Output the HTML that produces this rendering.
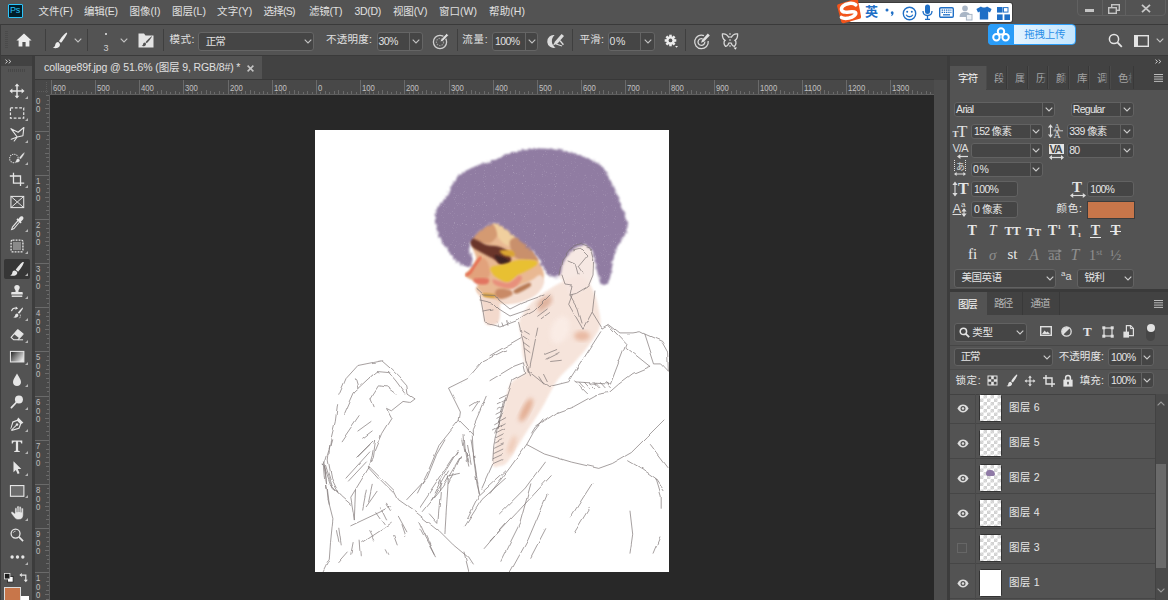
<!DOCTYPE html>
<html lang="zh-CN">
<head>
<meta charset="utf-8">
<title>collage89f.jpg @ 51.6% (图层 9, RGB/8#) *</title>
<style>
html,body{margin:0;padding:0}
body{width:1168px;height:600px;overflow:hidden;position:relative;background:#535353;font-family:"Liberation Sans","Noto Sans CJK SC",sans-serif;font-size:11px;color:#e0e0e0;line-height:1}
div,span,svg{position:absolute;box-sizing:border-box}
.t{white-space:nowrap}
svg{overflow:visible}
#art,#hruler,#vruler{overflow:hidden}
.fld{background:#454545;border:1px solid #656565;border-radius:3px}
.sep{width:1px;background:#3f3f3f}
</style>
<style id="tune">
#m1{font-size:10.5px !important;letter-spacing:-0.03px;margin-left:-0.4px}
#m2{font-size:10.5px !important;letter-spacing:-0.30px;margin-left:0.1px}
#m3{font-size:10.5px !important;letter-spacing:-0.03px;margin-left:-0.4px}
#m4{font-size:10.5px !important;letter-spacing:-0.01px;margin-left:0.1px}
#m5{font-size:10.5px !important;letter-spacing:0.07px;margin-left:0.1px}
#m6{font-size:10.5px !important;letter-spacing:-0.74px;margin-left:0.4px}
#m7{font-size:10.5px !important;letter-spacing:-0.28px;margin-left:0.1px}
#m8{font-size:10.5px !important;letter-spacing:-0.36px;margin-left:-0.4px}
#m9{font-size:10.5px !important;letter-spacing:-0.11px;margin-left:-0.1px}
#m10{font-size:10.5px !important;letter-spacing:-0.03px;margin-left:0.1px}
#m11{font-size:10.5px !important;letter-spacing:0.06px;margin-left:0.1px}
#tabtitle{font-size:10.5px !important;letter-spacing:-0.12px;margin-left:0.1px}
#o_mode{font-size:10.5px !important;letter-spacing:0.44px;margin-left:-0.4px}
#o_normal{font-size:10.5px !important;letter-spacing:-1.10px;margin-left:-0.2px}
#o_opac{font-size:10.5px !important;letter-spacing:0.27px;margin-left:0.0px}
#o_30{font-size:10.5px !important;letter-spacing:-0.51px;margin-left:-1.6px}
#o_flow{font-size:10.5px !important;letter-spacing:0.74px;margin-left:-0.7px}
#o_100{font-size:10.5px !important;letter-spacing:-0.65px;margin-left:0.1px}
#o_smooth{font-size:10.5px !important;letter-spacing:0.24px;margin-left:-0.6px}
#o_0{font-size:10.5px !important;letter-spacing:0.61px;margin-left:-1.4px}
#o_upload{font-size:10.5px !important;letter-spacing:-0.23px;margin-left:-0.7px}
#tab_zf{font-size:10.5px !important;letter-spacing:-0.80px;margin-left:1.1px}
#c_arial{font-size:10.5px !important;letter-spacing:-0.73px;margin-left:-0.9px}
#c_regular{font-size:10.5px !important;letter-spacing:-0.73px;margin-left:-0.2px}
#c_152{font-size:10.5px !important;letter-spacing:-0.71px;margin-left:-0.5px}
#c_339{font-size:10.5px !important;letter-spacing:-0.67px;margin-left:-0.3px}
#c_80{font-size:10.5px !important;letter-spacing:-0.69px;margin-left:-0.3px}
#c_0p{font-size:10.5px !important;letter-spacing:0.61px;margin-left:-1.4px}
#c_100a{font-size:10.5px !important;letter-spacing:-0.69px;margin-left:-0.4px}
#c_100b{font-size:10.5px !important;letter-spacing:-0.75px;margin-left:0.3px}
#c_0px{font-size:10.5px !important;letter-spacing:-0.49px;margin-left:-0.4px}
#c_color{font-size:10.5px !important;letter-spacing:0.69px;margin-left:-0.5px}
#c_lang{font-size:10.5px !important;letter-spacing:-0.50px;margin-left:-0.5px}
#c_sharp{font-size:10.5px !important;letter-spacing:-0.80px;margin-left:-0.5px}
#tab_layers{font-size:10.5px !important;letter-spacing:-1.20px;margin-left:1.0px}
#tab_paths{font-size:10.5px !important;letter-spacing:-1.80px;margin-left:0.1px}
#tab_chan{font-size:10.5px !important;letter-spacing:-1.20px;margin-left:-0.4px}
#l_type{font-size:10.5px !important;letter-spacing:-0.20px;margin-left:-0.3px}
#l_normal{font-size:10.5px !important;letter-spacing:-1.20px;margin-left:-0.2px}
#l_opacity{font-size:10.5px !important;letter-spacing:0.07px;margin-left:-0.8px}
#l_100a{font-size:10.5px !important;letter-spacing:-0.59px;margin-left:-0.5px}
#l_lock{font-size:10.5px !important;letter-spacing:0.59px;margin-left:-0.5px}
#l_fill{font-size:10.5px !important;letter-spacing:0.14px;margin-left:-0.3px}
#l_100b{font-size:10.5px !important;letter-spacing:-0.59px;margin-left:-0.5px}
#ly0{font-size:10.5px !important;letter-spacing:0.28px;margin-left:-0.6px}
#ly1{font-size:10.5px !important;letter-spacing:0.28px;margin-left:-0.6px}
#ly2{font-size:10.5px !important;letter-spacing:0.28px;margin-left:-0.6px}
#ly3{font-size:10.5px !important;letter-spacing:0.28px;margin-left:-0.6px}
#ly4{font-size:10.5px !important;letter-spacing:0.28px;margin-left:-0.6px}
#ly5{font-size:10.5px !important;letter-spacing:0.28px;margin-left:-0.6px}
</style>
</head>
<body>
<!-- MENU BAR -->
<div id="menubar" style="left:0;top:0;width:1168px;height:24px;background:#535353">
  <div style="left:8px;top:4px;width:15px;height:14px;background:#001e2b;border:1px solid #2cc4fa;border-radius:1px"></div>
  <span class="t" style="left:10px;top:6px;font-size:9px;color:#2cc4fa;letter-spacing:-0.3px">Ps</span>
  <span class="t m" id="m1" style="left:39px;top:6px">文件(F)</span>
  <span class="t m" id="m2" style="left:84px;top:6px">编辑(E)</span>
  <span class="t m" id="m3" style="left:130px;top:6px">图像(I)</span>
  <span class="t m" id="m4" style="left:172px;top:6px">图层(L)</span>
  <span class="t m" id="m5" style="left:217px;top:6px">文字(Y)</span>
  <span class="t m" id="m6" style="left:263px;top:6px">选择(S)</span>
  <span class="t m" id="m7" style="left:309px;top:6px">滤镜(T)</span>
  <span class="t m" id="m8" style="left:355px;top:6px">3D(D)</span>
  <span class="t m" id="m9" style="left:393px;top:6px">视图(V)</span>
  <span class="t m" id="m10" style="left:439px;top:6px">窗口(W)</span>
  <span class="t m" id="m11" style="left:489px;top:6px">帮助(H)</span>
</div>
<!-- TOPRIGHT -->
<div id="ime" style="left:836px;top:0;width:180px;height:26px">
  <div style="left:12px;top:2px;width:165px;height:21px;background:#3c3c3c;border-radius:3px"></div>
  <div style="left:13px;top:3px;width:163px;height:19px;background:#fff;border-radius:2px"></div>
  <svg style="left:0;top:0" width="26" height="25" viewBox="0 0 26 25"><path d="M2.2 4.2 L19.6 -1.2 Q21.4 -1.6 22 0.2 L25 16.6 Q25.2 18.2 23.6 18.8 L7.6 23.2 Q5.8 23.6 5.2 21.8 L1.2 6.4 Q0.8 4.8 2.2 4.2 Z" fill="#f2541b"/><path d="M20.6 6 C17.8 2.8 11 3 7.8 5.4 C4.4 8 5.4 11 9.4 11.7 C13 12.3 17.8 11.6 19.2 13.4 C20.2 15.4 16.4 17.6 12 18 C9 18.2 6.2 17.6 4.6 16.4" fill="none" stroke="#fff" stroke-width="3.5" stroke-linecap="round" transform="rotate(-8 12.5 11)"/></svg>
  <span class="t" id="ime_en" style="left:29px;top:5px;font-size:13px;font-weight:bold;color:#1f6fc6">英</span>
  <svg style="left:48px;top:6px" width="12" height="12" viewBox="0 0 12 12"><circle cx="3" cy="4" r="1.5" fill="#1f6fc6"/><path d="M8 5.2 C9.6 5.2 10 7 9.2 8.4 C8.6 9.4 7.6 10 6.8 10.2 C7.6 9.4 8 8.6 7.6 8 C6.4 7.6 6.6 5.2 8 5.2 Z" fill="#1f6fc6"/></svg>
  <svg style="left:66px;top:5.500px" width="15" height="15" viewBox="0 0 15 15"><circle cx="7.500" cy="7.500" r="6.200" fill="none" stroke="#1f6fc6" stroke-width="1.400"/><circle cx="5.200" cy="5.800" r="1" fill="#1f6fc6"/><circle cx="9.800" cy="5.800" r="1" fill="#1f6fc6"/><path d="M4.200 8.800 C5.400 11.400 9.600 11.400 10.800 8.800" fill="none" stroke="#1f6fc6" stroke-width="1.300"/></svg>
  <svg style="left:86px;top:4px" width="11" height="17" viewBox="0 0 11 17"><rect x="3" y="0.500" width="5" height="9.500" rx="2.500" fill="#1f6fc6"/><path d="M1 7 C1 13 10 13 10 7" fill="none" stroke="#1f6fc6" stroke-width="1.300"/><path d="M5.500 11.600 V15 M3 15.400 H8" stroke="#1f6fc6" stroke-width="1.300"/></svg>
  <svg style="left:103px;top:7px" width="15" height="11" viewBox="0 0 15 11"><rect x="0.700" y="0.700" width="13.600" height="9.600" rx="1.200" fill="none" stroke="#1f6fc6" stroke-width="1.400"/><path d="M2.600 3.200 H12.400 M2.600 5.400 H12.400" stroke="#1f6fc6" stroke-width="1.300" stroke-dasharray="1.400 0.800"/><path d="M4 7.800 H11" stroke="#1f6fc6" stroke-width="1.300"/></svg>
  <svg style="left:123px;top:5px" width="14" height="16" viewBox="0 0 14 16"><circle cx="6" cy="3.400" r="2.800" fill="#a9b6c6"/><path d="M0.600 12 C0.600 8 3 7 6 7 C9 7 11.400 8 11.400 12 Z" fill="#a9b6c6"/><rect x="7.400" y="9.400" width="5.600" height="5.600" fill="#eef2f6" stroke="#a9b6c6" stroke-width="1"/></svg>
  <svg style="left:140px;top:6px" width="16" height="14" viewBox="0 0 16 14"><path d="M5 0.400 C6 1.800 10 1.800 11 0.400 L15.600 3 L14 6.400 L12.200 5.600 V13.600 H3.800 V5.600 L2 6.400 L0.400 3 Z" fill="#1f6fc6"/></svg>
  <svg style="left:160.500px;top:6.500px" width="13" height="13" viewBox="0 0 13 13"><rect x="0" y="0" width="5.600" height="5.600" fill="#1f6fc6"/><rect x="7.400" y="0" width="5.600" height="5.600" fill="none" stroke="#1f6fc6" stroke-width="1.200" transform="translate(0.600 0.600) scale(0.800)" /><rect x="0" y="7.400" width="5.600" height="5.600" fill="#1f6fc6"/><rect x="7.400" y="7.400" width="5.600" height="5.600" fill="#1f6fc6"/></svg>
</div>
<div id="winctl" style="left:1077px;top:-1px;width:89px;height:17px;border:1px solid #616161;border-radius:0 0 4px 4px">
  <div style="left:23.500px;top:0;width:1px;height:16px;background:#616161"></div>
  <div style="left:46.500px;top:0;width:1px;height:16px;background:#616161"></div>
  <div style="left:7px;top:9px;width:9px;height:3px;background:#c4c4c4"></div>
  <svg style="left:30px;top:4px" width="12" height="10" viewBox="0 0 12 10"><rect x="3.700" y="0.700" width="7.600" height="5.600" fill="none" stroke="#c4c4c4" stroke-width="1.400"/><rect x="0.700" y="3.700" width="7.600" height="5.600" fill="#535353" stroke="#c4c4c4" stroke-width="1.400"/></svg>
  <svg style="left:62.500px;top:4px" width="10" height="9" viewBox="0 0 10 9"><path d="M1 0.800 L9 8.200 M9 0.800 L1 8.200" stroke="#c8c8c8" stroke-width="1.800"/></svg>
</div>
<!-- /TOPRIGHT -->
<!-- OPTIONS BAR -->
<div id="optbar" style="left:0;top:24px;width:1168px;height:32px;background:#535353;border-top:1px solid #3a3a3a;border-bottom:1px solid #3a3a3a">
  <!-- gripper -->
  <div style="left:4.5px;top:6px;width:3px;height:18px;background:repeating-linear-gradient(to bottom,#4a4a4a 0 1px,#535353 1px 2px)"></div>
  <!-- home -->
  <svg style="left:16px;top:8px" width="16" height="14" viewBox="0 0 16 14"><path d="M8 0.6 L0.4 7.4 H2.6 V13.6 H6.4 V9 H9.6 V13.6 H13.4 V7.4 H15.6 Z" fill="#ececec"/></svg>
  <div class="sep" style="left:45px;top:4px;height:22px"></div>
  <!-- brush -->
  <svg style="left:52px;top:7px" width="16" height="17" viewBox="0 0 16 17"><path d="M14.6 0.6 C13 1.2 8.5 6.5 7 9.2 L9 10.8 C11 8.6 14.6 3.2 15.2 1.2 Z" fill="#ececec"/><path d="M6.2 10 C4.2 10 3.4 11.6 3.2 13 C3 14.4 2 15.2 0.8 15.6 C3 16.6 6.4 16.2 7.6 14.2 C8.4 12.8 8 11 6.2 10 Z" fill="#ececec"/></svg>
  <svg style="left:74.0px;top:13.0px" width="8" height="5" viewBox="0 0 8 5"><path d="M0.7 0.7 L4 4 L7.3 0.7" fill="none" stroke="#c4c4c4" stroke-width="1.1"/></svg>
  <div class="sep" style="left:87px;top:4px;height:22px"></div>
  <div style="left:105px;top:8px;width:2px;height:2px;background:#e8e8e8;border-radius:1px"></div>
  <span class="t" style="left:103.5px;top:19px;font-size:9px;color:#d0d0d0">3</span>
  <svg style="left:120.0px;top:13.0px" width="8" height="5" viewBox="0 0 8 5"><path d="M0.7 0.7 L4 4 L7.3 0.7" fill="none" stroke="#c4c4c4" stroke-width="1.1"/></svg>
  <!-- brush settings folder icon -->
  <svg style="left:138px;top:8px" width="16" height="15" viewBox="0 0 16 15"><path d="M0.5 0.5 H6 L7.5 2.5 H15.5 V14.5 H0.5 Z" fill="#e4e4e4"/><path d="M13.6 3.2 C12 4.2 8.6 7.6 7.6 9.2 L8.8 10.2 C10.4 8.8 13.2 5.4 14 3.6 Z" fill="#535353"/><path d="M7 9.6 C5.6 9.6 5.2 10.6 5 11.4 C4.8 12.2 4.2 12.6 3.4 12.8 C5 13.6 7.2 13.2 7.8 12 C8.2 11 8 10.2 7 9.6 Z" fill="#535353"/></svg>
  <div class="sep" style="left:163px;top:4px;height:22px"></div>
  <span class="t" id="o_mode" style="left:170px;top:9px;font-size:12px">模式:</span>
  <div class="fld" style="left:198px;top:7px;width:116px;height:19px"></div>
  <span class="t" id="o_normal" style="left:206px;top:10.5px;font-size:12px">正常</span>
  <svg style="left:304.0px;top:14.0px" width="8" height="5" viewBox="0 0 8 5"><path d="M0.7 0.7 L4 4 L7.3 0.7" fill="none" stroke="#c4c4c4" stroke-width="1.1"/></svg>
  <span class="t" id="o_opac" style="left:326px;top:9px;font-size:12px">不透明度:</span>
  <div class="fld" style="left:377px;top:7px;width:46px;height:19px"></div>
  <div style="left:409px;top:8px;width:1px;height:17px;background:#656565"></div>
  <span class="t" id="o_30" style="left:380px;top:10.5px;font-size:12px">30%</span>
  <svg style="left:412.0px;top:14.0px" width="8" height="5" viewBox="0 0 8 5"><path d="M0.7 0.7 L4 4 L7.3 0.7" fill="none" stroke="#c4c4c4" stroke-width="1.1"/></svg>
  <!-- pressure opacity icon -->
  <svg style="left:432px;top:7px" width="18" height="18" viewBox="0 0 18 18"><circle cx="8" cy="10" r="6.6" fill="none" stroke="#d0d0d0" stroke-width="1.3"/><circle cx="8" cy="10" r="3.6" fill="none" stroke="#9a9a9a" stroke-width="1.2" stroke-dasharray="1.5 1"/><path d="M8 10 L9 7.4 L14.6 1.4 L16.6 3.2 L10.8 9.2 Z" fill="#e0e0e0" stroke="#535353" stroke-width="0.8"/></svg>
  <div class="sep" style="left:457px;top:4px;height:22px"></div>
  <span class="t" id="o_flow" style="left:463px;top:9px;font-size:12px">流量:</span>
  <div class="fld" style="left:492px;top:7px;width:46px;height:19px"></div>
  <div style="left:525px;top:8px;width:1px;height:17px;background:#656565"></div>
  <span class="t" id="o_100" style="left:495px;top:10.5px;font-size:12px">100%</span>
  <svg style="left:528.0px;top:14.0px" width="8" height="5" viewBox="0 0 8 5"><path d="M0.7 0.7 L4 4 L7.3 0.7" fill="none" stroke="#c4c4c4" stroke-width="1.1"/></svg>
  <!-- airbrush icon -->
  <svg style="left:547px;top:7px" width="19" height="18" viewBox="0 0 19 18"><path d="M7.6 3.2 A6.4 6.4 0 1 0 8.6 15.6 A7.6 7.6 0 0 1 7.6 3.2 Z" fill="#dcdcdc"/><path d="M6 13.4 L8 9.4 L14.6 2 L17 4 L10.6 11.4 Z" fill="#dcdcdc"/><path d="M13 8.6 L16.4 12.8" stroke="#dcdcdc" stroke-width="1.4"/><path d="M9 12 L15 14" stroke="#dcdcdc" stroke-width="1.2"/></svg>
  <div class="sep" style="left:572px;top:4px;height:22px"></div>
  <span class="t" id="o_smooth" style="left:580px;top:9px;font-size:12px">平滑:</span>
  <div class="fld" style="left:608px;top:7px;width:47px;height:19px"></div>
  <div style="left:640px;top:8px;width:1px;height:17px;background:#656565"></div>
  <span class="t" id="o_0" style="left:611px;top:10.5px;font-size:12px">0%</span>
  <svg style="left:644.0px;top:14.0px" width="8" height="5" viewBox="0 0 8 5"><path d="M0.7 0.7 L4 4 L7.3 0.7" fill="none" stroke="#c4c4c4" stroke-width="1.1"/></svg>
  <!-- gear -->
  <svg style="left:663.5px;top:9px" width="14.5" height="14.5" viewBox="0 0 17 17"><g transform="translate(7.6 7.6)"><g fill="#ececec"><rect x="-1.5" y="-6.8" width="3" height="13.6"/><rect x="-1.5" y="-6.8" width="3" height="13.6" transform="rotate(45)"/><rect x="-1.5" y="-6.8" width="3" height="13.6" transform="rotate(90)"/><rect x="-1.5" y="-6.8" width="3" height="13.6" transform="rotate(135)"/><circle r="5"/></g><circle r="2.2" fill="#535353"/></g><path d="M13 14 H16.4 L14.7 16.2 Z" fill="#ececec"/></svg>
  <div class="sep" style="left:685px;top:4px;height:22px"></div>
  <!-- target/pressure size -->
  <svg style="left:693px;top:7px" width="18" height="18" viewBox="0 0 18 18"><path d="M11 3.6 A6.8 6.8 0 1 0 15.2 9" fill="none" stroke="#d8d8d8" stroke-width="1.3"/><path d="M9.6 6.8 A3.4 3.4 0 1 0 11.8 9.6" fill="none" stroke="#d8d8d8" stroke-width="1.3"/><path d="M8 10.8 L9 8 L14.8 1.6 L16.8 3.4 L10.8 9.8 Z" fill="#e0e0e0"/></svg>
  <!-- butterfly -->
  <svg style="left:721px;top:7px" width="18" height="19" viewBox="0 0 18 19"><path d="M8 5.6 C6.4 3 3.4 1.6 1.4 2 C1.2 4.4 2 7 4 8.4 C2.6 9.4 2.6 12.6 4.6 14.4 C6.2 14 7.6 12.4 8 10.6" fill="none" stroke="#d8d8d8" stroke-width="1.3"/><path d="M10 5.6 C11.6 3 14.6 1.6 16.6 2 C16.8 4.4 16 7 14 8.4 C15.4 9.4 15.4 12.6 13.4 14.4 C11.8 14 10.4 12.4 10 10.6" fill="none" stroke="#d8d8d8" stroke-width="1.3"/><path d="M9 1 V16" stroke="#d8d8d8" stroke-width="1" stroke-dasharray="2 1"/><path d="M12.6 15.6 H16 L14.3 17.8 Z" fill="#ececec"/></svg>
  <!-- upload button -->
  <div style="left:988px;top:-1px;width:88px;height:21px;border-radius:4px;background:linear-gradient(to right,#bfe4ff,#e4f4ff 30%,#c4e6ff);border:1px solid #2d9df5"></div>
  <div style="left:988px;top:-1px;width:26px;height:21px;border-radius:4px 0 0 4px;background:#2a9df8"></div>
  <svg style="left:991px;top:1px" width="20" height="17" viewBox="0 0 20 17"><circle cx="10" cy="5.4" r="3.2" fill="none" stroke="#fff" stroke-width="2"/><circle cx="5.4" cy="11.2" r="3.2" fill="none" stroke="#fff" stroke-width="2"/><circle cx="14.6" cy="11.2" r="3.2" fill="none" stroke="#fff" stroke-width="2"/></svg>
  <span class="t" id="o_upload" style="left:1025px;top:4px;font-size:11px;color:#2a8fe8">拖拽上传</span>
  <!-- search -->
  <svg style="left:1108px;top:8px" width="15" height="15" viewBox="0 0 15 15"><circle cx="6" cy="6" r="4.6" fill="none" stroke="#e4e4e4" stroke-width="1.5"/><path d="M9.4 9.4 L13.8 13.8" stroke="#e4e4e4" stroke-width="1.8"/></svg>
  <!-- workspace -->
  <svg style="left:1134px;top:10px" width="15" height="12" viewBox="0 0 15 12"><rect x="0.7" y="0.7" width="13.6" height="10.6" fill="none" stroke="#e4e4e4" stroke-width="1.4"/><rect x="1" y="1" width="3" height="10" fill="#e4e4e4"/></svg>
  <svg style="left:1156.0px;top:13.0px" width="8" height="5" viewBox="0 0 8 5"><path d="M0.7 0.7 L4 4 L7.3 0.7" fill="none" stroke="#c4c4c4" stroke-width="1.1"/></svg>
</div>
<div style="left:0;top:24px;width:1px;height:576px;background:#3c3c3c;z-index:5"></div>
<!-- TAB STRIP -->
<div id="tabstrip" style="left:0;top:56px;width:950px;height:24px;background:#424242">
  <div style="left:35px;top:23px;width:899px;height:1px;background:#383838"></div>
  <div id="doctab" style="left:35px;top:0;width:227px;height:23px;background:#535353"></div>
  <span class="t" id="tabtitle" style="left:44px;top:6px;font-size:11px">collage89f.jpg @ 51.6% (图层 9, RGB/8#) *</span>
  <svg style="left:246.5px;top:8.5px" width="7" height="7" viewBox="0 0 7 7"><path d="M0.6 0.6L6.4 6.4M6.4 0.6L0.6 6.4" stroke="#c4c4c4" stroke-width="1.5"/></svg>
</div>
<!-- LEFT TOOLBAR -->
<div id="toolbar" style="left:0;top:56px;width:32px;height:544px;background:#535353">
  <div style="left:0;top:0;width:32px;height:10px;background:#424242"></div><div style="left:0;top:0;width:1px;height:544px;background:#404040"></div>
  <svg style="left:5px;top:2.5px" width="7" height="5" viewBox="0 0 9 6"><path d="M0.6 0.6 L3.2 3 L0.6 5.4 M4.8 0.6 L7.4 3 L4.8 5.4" fill="none" stroke="#d8d8d8" stroke-width="1.2"/></svg>
  <div style="left:8px;top:13px;width:17px;height:3px;background:repeating-linear-gradient(to right,#474747 0 1px,#535353 1px 2px)"></div>
  <div style="left:3.5px;top:202.5px;width:26px;height:20px;background:#363636;border-radius:2px"></div>
  <svg style="left:8.6px;top:27.0px" width="16" height="16" viewBox="0 0 20 20"><path d="M10 0.6 L13 4.2 H10.9 V9.1 H15.8 V7 L19.4 10 L15.8 13 V10.9 H10.9 V15.8 H13 L10 19.4 L7 15.8 H9.1 V10.9 H4.2 V13 L0.6 10 L4.2 7 V9.1 H9.1 V4.2 H7 Z" fill="#e6e6e6"/></svg>
  <svg style="left:24.7px;top:39.7px" width="3" height="3" viewBox="0 0 3 3"><path d="M3 0 V3 H0 Z" fill="#b4b4b4"/></svg>
  <svg style="left:8.6px;top:49.2px" width="16" height="16" viewBox="0 0 20 20"><rect x="1.8" y="3.6" width="16.6" height="12.8" fill="none" stroke="#e6e6e6" stroke-width="1.5" stroke-dasharray="3.4 2.1"/></svg>
  <svg style="left:24.7px;top:61.9px" width="3" height="3" viewBox="0 0 3 3"><path d="M3 0 V3 H0 Z" fill="#b4b4b4"/></svg>
  <svg style="left:8.6px;top:71.4px" width="16" height="16" viewBox="0 0 20 20"><path d="M2.4 2.1 L11.4 6.6 L18.6 0.6 L17.4 11 L10.3 12.5 Z M10.3 12.5 L2.8 15.3 M10.3 12.5 L6.5 17.5" fill="none" stroke="#e6e6e6" stroke-width="1.4" stroke-linejoin="round" stroke-linecap="round"/></svg>
  <svg style="left:24.7px;top:84.1px" width="3" height="3" viewBox="0 0 3 3"><path d="M3 0 V3 H0 Z" fill="#b4b4b4"/></svg>
  <svg style="left:8.6px;top:93.6px" width="16" height="16" viewBox="0 0 20 20"><circle cx="6.2" cy="10.6" r="5.4" fill="none" stroke="#e6e6e6" stroke-width="1.3" stroke-dasharray="1.5 1.3"/><path d="M18.8 3 C17.2 4 13.6 8 12.4 10 L14.4 11.6 C16.2 9.8 19 5.8 19.6 3.8 C19.8 3 19.3 2.7 18.8 3 Z" fill="#e6e6e6" stroke="#535353" stroke-width="0.6"/><path d="M11.6 10.6 C9.6 10.4 9 11.8 8.8 13 C8.6 14.2 7.8 14.8 6.8 15.2 C9 16.4 12.2 15.8 13.4 14 C14.2 12.8 13.6 11.4 11.6 10.6 Z" fill="#e6e6e6" stroke="#535353" stroke-width="0.6"/></svg>
  <svg style="left:24.7px;top:106.3px" width="3" height="3" viewBox="0 0 3 3"><path d="M3 0 V3 H0 Z" fill="#b4b4b4"/></svg>
  <svg style="left:8.6px;top:115.8px" width="16" height="16" viewBox="0 0 20 20"><path d="M5.6 0.8 V13.8 H19 M1 5 H14.4 V17.6" fill="none" stroke="#e6e6e6" stroke-width="1.6"/></svg>
  <svg style="left:24.7px;top:128.5px" width="3" height="3" viewBox="0 0 3 3"><path d="M3 0 V3 H0 Z" fill="#b4b4b4"/></svg>
  <svg style="left:8.6px;top:138.0px" width="16" height="16" viewBox="0 0 20 20"><rect x="2.4" y="3" width="16" height="14" fill="none" stroke="#e6e6e6" stroke-width="1.3"/><path d="M2.4 3 L18.4 17 M18.4 3 L2.4 17" stroke="#e6e6e6" stroke-width="1.2"/></svg>
  <svg style="left:8.6px;top:160.2px" width="16" height="16" viewBox="0 0 20 20"><path transform="translate(10 10) scale(1.12) translate(-10 -10)" d="M16.6 2 C15.4 1 13.8 1.4 13 2.6 L11.6 4.4 L10.6 3.6 L9.4 5 L10.4 6 L4.4 13 L3.6 15.6 L3 17 L4.6 16.6 L7 15.6 L13 8.4 L14 9.4 L15.2 8 L14.4 7.2 L16.2 5.6 C17.4 4.6 17.6 3 16.6 2 Z M11.4 7 L12.2 7.8 L6.4 14.6 L5 15.2 L5.4 13.8 Z" fill="#e6e6e6" fill-rule="evenodd"/></svg>
  <svg style="left:24.7px;top:172.9px" width="3" height="3" viewBox="0 0 3 3"><path d="M3 0 V3 H0 Z" fill="#b4b4b4"/></svg>
  <svg style="left:8.6px;top:182.4px" width="16" height="16" viewBox="0 0 20 20"><rect x="5" y="5" width="10" height="10" fill="#8a8a8a"/><rect x="2.6" y="2.6" width="14.8" height="14.8" rx="2" fill="none" stroke="#e6e6e6" stroke-width="1.7" stroke-dasharray="2.3 1.4"/></svg>
  <svg style="left:24.7px;top:195.1px" width="3" height="3" viewBox="0 0 3 3"><path d="M3 0 V3 H0 Z" fill="#b4b4b4"/></svg>
  <svg style="left:8.6px;top:204.6px" width="16" height="16" viewBox="0 0 20 20"><path d="M17.2 1.2 C15 2.4 10.2 8 8.4 11 L11.4 13.4 C13.8 10.8 17.8 4.8 18.5 2.3 C18.7 1.3 17.9 0.9 17.2 1.2 Z" fill="#e6e6e6"/><path d="M7.4 12 C5 11.8 4.2 13.6 4 15.2 C3.8 16.6 2.8 17.4 1.4 17.8 C4.2 19.2 8.4 18.6 10 16.2 C10.9 14.8 10.2 13 7.4 12 Z" fill="#e6e6e6"/></svg>
  <svg style="left:24.7px;top:217.3px" width="3" height="3" viewBox="0 0 3 3"><path d="M3 0 V3 H0 Z" fill="#b4b4b4"/></svg>
  <svg style="left:8.6px;top:226.8px" width="16" height="16" viewBox="0 0 20 20"><path d="M10 2.4 C7.8 2.4 6.6 4 6.6 5.6 C6.6 7.4 8 8.2 8.2 9.6 C8.4 10.8 8.2 11.4 7 11.4 H4 C3.2 11.4 2.8 12 2.8 12.6 V14.4 H17.2 V12.6 C17.2 12 16.8 11.4 16 11.4 H13 C11.8 11.4 11.6 10.8 11.8 9.6 C12 8.2 13.4 7.4 13.4 5.6 C13.4 4 12.2 2.4 10 2.4 Z" fill="#e6e6e6"/><rect x="3.4" y="15.6" width="13.2" height="1.8" fill="#e6e6e6"/></svg>
  <svg style="left:24.7px;top:239.5px" width="3" height="3" viewBox="0 0 3 3"><path d="M3 0 V3 H0 Z" fill="#b4b4b4"/></svg>
  <svg style="left:8.6px;top:249.0px" width="16" height="16" viewBox="0 0 20 20"><path d="M17 3 C15.6 4 12 8 11 9.8 L12.6 11 C14.2 9.4 16.8 5.6 17.6 3.6 Z" fill="#e6e6e6"/><path d="M10.2 10.6 C8.4 10.6 7.8 12 7.6 13.2 C7.4 14.4 6.4 15 5.2 15.4 C7.4 16.4 10.4 16 11.4 14.2 C12 13 11.8 11.4 10.2 10.6 Z" fill="#e6e6e6"/><path d="M3 7.6 C4 4.8 6.6 3.4 9.6 4" fill="none" stroke="#e6e6e6" stroke-width="1.4"/><path d="M8.6 2 L11.4 4.4 L8 5.8 Z" fill="#e6e6e6"/><path d="M14 12 C14.8 14 14 16 12.4 17" fill="none" stroke="#e6e6e6" stroke-width="1.1" stroke-dasharray="1.4 1.2"/></svg>
  <svg style="left:24.7px;top:261.7px" width="3" height="3" viewBox="0 0 3 3"><path d="M3 0 V3 H0 Z" fill="#b4b4b4"/></svg>
  <svg style="left:8.6px;top:271.2px" width="16" height="16" viewBox="0 0 20 20"><path d="M11 3.4 L17.6 8.8 L11 16 H6 L2.6 13 Z" fill="none" stroke="#e6e6e6" stroke-width="1.4" stroke-linejoin="round"/><path d="M11 3.4 L17.6 8.8 L12.8 14 L6.2 8.6 Z" fill="#e6e6e6"/><path d="M11 16 H17.6" stroke="#e6e6e6" stroke-width="1.3"/></svg>
  <svg style="left:24.7px;top:283.9px" width="3" height="3" viewBox="0 0 3 3"><path d="M3 0 V3 H0 Z" fill="#b4b4b4"/></svg>
  <svg style="left:8.6px;top:293.4px" width="16" height="16" viewBox="0 0 20 20"><defs><linearGradient id="gg" x1="0" y1="0" x2="1" y2="0.6"><stop offset="0" stop-color="#1e1e1e"/><stop offset="1" stop-color="#e4e4e4"/></linearGradient></defs><rect x="1.8" y="3" width="16.8" height="13.2" fill="url(#gg)" stroke="#e6e6e6" stroke-width="1.3"/></svg>
  <svg style="left:24.7px;top:306.1px" width="3" height="3" viewBox="0 0 3 3"><path d="M3 0 V3 H0 Z" fill="#b4b4b4"/></svg>
  <svg style="left:8.6px;top:315.6px" width="16" height="16" viewBox="0 0 20 20"><path d="M10 2 C8 6 5 9.4 5 12.6 C5 15.6 7.2 17.6 10 17.6 C12.8 17.6 15 15.6 15 12.6 C15 9.4 12 6 10 2 Z" fill="#e6e6e6"/></svg>
  <svg style="left:24.7px;top:328.3px" width="3" height="3" viewBox="0 0 3 3"><path d="M3 0 V3 H0 Z" fill="#b4b4b4"/></svg>
  <svg style="left:8.6px;top:337.8px" width="16" height="16" viewBox="0 0 20 20"><circle cx="12.4" cy="7" r="5" fill="#e6e6e6"/><path d="M9 10.6 L3 17" stroke="#e6e6e6" stroke-width="2.2" stroke-linecap="round"/></svg>
  <svg style="left:24.7px;top:350.5px" width="3" height="3" viewBox="0 0 3 3"><path d="M3 0 V3 H0 Z" fill="#b4b4b4"/></svg>
  <svg style="left:8.6px;top:360.0px" width="16" height="16" viewBox="0 0 20 20"><path d="M11.6 2 L18 8.4 L15.4 10 L13 16 L3.4 18.6 L2.4 17.6 L8.6 11.4 C8.2 10.4 8.8 9.2 10 9.2 C11.2 9.2 12 10.4 11.6 11.4 C11.2 12.4 10 12.6 9.4 12.2 L4.6 17 L12 14.8 L13.8 9.6 L10.4 6.2 L5.4 8 L3 15.4 L1.6 16.6 L4.2 7 L10 4.6 Z" fill="#e6e6e6"/></svg>
  <svg style="left:24.7px;top:372.7px" width="3" height="3" viewBox="0 0 3 3"><path d="M3 0 V3 H0 Z" fill="#b4b4b4"/></svg>
  <svg style="left:8.6px;top:382.2px" width="16" height="16" viewBox="0 0 20 20"><path d="M3.4 3 H16.6 V7 H15.2 C15 5.4 14.4 4.8 13 4.8 H11.4 V15 C11.4 16 11.8 16.4 13.4 16.4 V17.6 H6.6 V16.4 C8.2 16.4 8.6 16 8.6 15 V4.8 H7 C5.6 4.8 5 5.4 4.8 7 H3.4 Z" fill="#e6e6e6"/></svg>
  <svg style="left:24.7px;top:394.9px" width="3" height="3" viewBox="0 0 3 3"><path d="M3 0 V3 H0 Z" fill="#b4b4b4"/></svg>
  <svg style="left:8.6px;top:404.4px" width="16" height="16" viewBox="0 0 20 20"><path d="M5.6 1.6 L15.4 11.4 H11 L13.2 16.6 L10.8 17.6 L8.6 12.4 L5.6 15.4 Z" fill="#e6e6e6"/></svg>
  <svg style="left:24.7px;top:417.1px" width="3" height="3" viewBox="0 0 3 3"><path d="M3 0 V3 H0 Z" fill="#b4b4b4"/></svg>
  <svg style="left:8.6px;top:426.6px" width="16" height="16" viewBox="0 0 20 20"><rect x="1.8" y="3.2" width="16.8" height="13.4" fill="#6c6c6c" stroke="#e6e6e6" stroke-width="1.4"/></svg>
  <svg style="left:24.7px;top:439.3px" width="3" height="3" viewBox="0 0 3 3"><path d="M3 0 V3 H0 Z" fill="#b4b4b4"/></svg>
  <svg style="left:8.6px;top:448.8px" width="16" height="16" viewBox="0 0 20 20"><path d="M5.4 11 V5 C5.4 3.4 7.8 3.4 7.8 5 V9.4 V3 C7.8 1.4 10.2 1.4 10.2 3 V9.2 V3.4 C10.2 1.8 12.6 1.8 12.6 3.4 V9.6 V5.4 C12.6 3.8 15 3.8 15 5.4 V12.8 C15 16.6 13 18.6 9.8 18.6 C7 18.6 5.6 17.4 4 15 L1 10.8 C0.2 9.4 2.2 8.2 3.4 9.6 Z" fill="#e6e6e6" stroke="#535353" stroke-width="0.5" transform="translate(1.6 -0.4) scale(1.08 1)"/></svg>
  <svg style="left:24.7px;top:461.5px" width="3" height="3" viewBox="0 0 3 3"><path d="M3 0 V3 H0 Z" fill="#b4b4b4"/></svg>
  <svg style="left:8.6px;top:471.0px" width="16" height="16" viewBox="0 0 20 20"><circle cx="8.2" cy="8.2" r="5.6" fill="none" stroke="#e6e6e6" stroke-width="1.6"/><path d="M12.4 12.4 L17.6 17.6" stroke="#e6e6e6" stroke-width="2.2"/><path d="M5.2 7.4 C5.6 6 6.8 5.2 8.2 5.2" fill="none" stroke="#e6e6e6" stroke-width="1"/></svg>
  <svg style="left:8.6px;top:493.2px" width="16" height="16" viewBox="0 0 20 20"><circle cx="3.9" cy="10" r="2.1" fill="#e6e6e6"/><circle cx="10.6" cy="10" r="2.1" fill="#e6e6e6"/><circle cx="17.3" cy="10" r="2.1" fill="#e6e6e6"/></svg>
  <svg style="left:24.7px;top:505.9px" width="3" height="3" viewBox="0 0 3 3"><path d="M3 0 V3 H0 Z" fill="#b4b4b4"/></svg>
  <svg style="left:4px;top:517px" width="9.5" height="9.5" viewBox="0 0 12 12"><rect x="4.5" y="4.5" width="7" height="7" fill="#fff" stroke="#1c1c1c" stroke-width="1"/><rect x="0.5" y="0.5" width="7" height="7" fill="#1c1c1c" stroke="#e8e8e8" stroke-width="1"/></svg>
  <svg style="left:18.5px;top:517px" width="9.5" height="9.5" viewBox="0 0 12 12"><path d="M3.4 2.6 H8.6 V9" fill="none" stroke="#e6e6e6" stroke-width="1.5"/><path d="M3.6 0 L0.4 2.6 L3.6 5.2 Z M6 8.4 L8.6 11.8 L11.2 8.4 Z" fill="#e6e6e6"/></svg>
  <div style="left:20.5px;top:540px;width:8px;height:8px;background:#fff"></div>
  <div style="left:4px;top:530.5px;width:16.5px;height:16px;background:#c8764a;border:1px solid #dcdcdc"></div>
</div>
<div style="left:32px;top:56px;width:3px;height:544px;background:#3c3c3c"></div>
<!-- RULERS + CANVAS -->
<!--RULERS-->
<svg id="hruler" style="left:35px;top:80px" width="899" height="15" viewBox="0 0 899 15" shape-rendering="crispEdges">
<rect width="899" height="15" fill="#484848"/>
<rect x="15" y="14" width="884" height="1" fill="#5e5e5e"/>
<path d="M16.5 0V14 M20.5 12V14 M25.5 11V14 M29.5 12V14 M34.5 11V14 M38.5 10V14 M42.5 11V14 M47.5 12V14 M51.5 11V14 M56.5 12V14 M60.5 0V14 M65.5 12V14 M69.5 11V14 M73.5 12V14 M78.5 11V14 M82.5 10V14 M87.5 11V14 M91.5 12V14 M95.5 11V14 M100.5 12V14 M104.5 0V14 M109.5 12V14 M113.5 11V14 M118.5 12V14 M122.5 11V14 M126.5 10V14 M131.5 11V14 M135.5 12V14 M140.5 11V14 M144.5 12V14 M148.5 0V14 M153.5 12V14 M157.5 11V14 M162.5 12V14 M166.5 11V14 M171.5 10V14 M175.5 11V14 M179.5 12V14 M184.5 11V14 M188.5 12V14 M193.5 0V14 M197.5 12V14 M201.5 11V14 M206.5 12V14 M210.5 11V14 M215.5 10V14 M219.5 11V14 M224.5 12V14 M228.5 11V14 M232.5 12V14 M237.5 0V14 M241.5 12V14 M246.5 11V14 M250.5 12V14 M254.5 11V14 M259.5 10V14 M263.5 11V14 M268.5 12V14 M272.5 11V14 M277.5 12V14 M281.5 0V14 M285.5 12V14 M290.5 11V14 M294.5 12V14 M299.5 11V14 M303.5 10V14 M308.5 11V14 M312.5 12V14 M316.5 11V14 M321.5 12V14 M325.5 0V14 M330.5 12V14 M334.5 11V14 M338.5 12V14 M343.5 11V14 M347.5 10V14 M352.5 11V14 M356.5 12V14 M361.5 11V14 M365.5 12V14 M369.5 0V14 M374.5 12V14 M378.5 11V14 M383.5 12V14 M387.5 11V14 M391.5 10V14 M396.5 11V14 M400.5 12V14 M405.5 11V14 M409.5 12V14 M414.5 0V14 M418.5 12V14 M422.5 11V14 M427.5 12V14 M431.5 11V14 M436.5 10V14 M440.5 11V14 M444.5 12V14 M449.5 11V14 M453.5 12V14 M458.5 0V14 M462.5 12V14 M467.5 11V14 M471.5 12V14 M475.5 11V14 M480.5 10V14 M484.5 11V14 M489.5 12V14 M493.5 11V14 M497.5 12V14 M502.5 0V14 M506.5 12V14 M511.5 11V14 M515.5 12V14 M520.5 11V14 M524.5 10V14 M528.5 11V14 M533.5 12V14 M537.5 11V14 M542.5 12V14 M546.5 0V14 M550.5 12V14 M555.5 11V14 M559.5 12V14 M564.5 11V14 M568.5 10V14 M573.5 11V14 M577.5 12V14 M581.5 11V14 M586.5 12V14 M590.5 0V14 M595.5 12V14 M599.5 11V14 M603.5 12V14 M608.5 11V14 M612.5 10V14 M617.5 11V14 M621.5 12V14 M626.5 11V14 M630.5 12V14 M634.5 0V14 M639.5 12V14 M643.5 11V14 M648.5 12V14 M652.5 11V14 M656.5 10V14 M661.5 11V14 M665.5 12V14 M670.5 11V14 M674.5 12V14 M679.5 0V14 M683.5 12V14 M687.5 11V14 M692.5 12V14 M696.5 11V14 M701.5 10V14 M705.5 11V14 M709.5 12V14 M714.5 11V14 M718.5 12V14 M723.5 0V14 M727.5 12V14 M732.5 11V14 M736.5 12V14 M740.5 11V14 M745.5 10V14 M749.5 11V14 M754.5 12V14 M758.5 11V14 M762.5 12V14 M767.5 0V14 M771.5 12V14 M776.5 11V14 M780.5 12V14 M785.5 11V14 M789.5 10V14 M793.5 11V14 M798.5 12V14 M802.5 11V14 M807.5 12V14 M811.5 0V14 M815.5 12V14 M820.5 11V14 M824.5 12V14 M829.5 11V14 M833.5 10V14 M838.5 11V14 M842.5 12V14 M846.5 11V14 M851.5 12V14 M855.5 0V14 M860.5 12V14 M864.5 11V14 M868.5 12V14 M873.5 11V14 M877.5 10V14 M882.5 11V14 M886.5 12V14 M891.5 11V14 M895.5 12V14" stroke="#6a6a6a" stroke-width="1" fill="none"/>
<rect x="0" y="0" width="15" height="15" fill="#484848"/>
<path d="M11.5 2V14 M2 11.5H14" stroke="#5c5c5c" stroke-width="1" stroke-dasharray="1 1" fill="none"/>
<g font-family="Liberation Sans, sans-serif" font-size="9.5" fill="#c0c0c0" shape-rendering="auto">
<text x="18" y="11" textLength="12.9" lengthAdjust="spacingAndGlyphs">600</text>
<text x="62" y="11" textLength="12.9" lengthAdjust="spacingAndGlyphs">500</text>
<text x="106" y="11" textLength="12.9" lengthAdjust="spacingAndGlyphs">400</text>
<text x="150" y="11" textLength="12.9" lengthAdjust="spacingAndGlyphs">300</text>
<text x="195" y="11" textLength="12.9" lengthAdjust="spacingAndGlyphs">200</text>
<text x="239" y="11" textLength="12.9" lengthAdjust="spacingAndGlyphs">100</text>
<text x="283" y="11" textLength="4.3" lengthAdjust="spacingAndGlyphs">0</text>
<text x="327" y="11" textLength="12.9" lengthAdjust="spacingAndGlyphs">100</text>
<text x="371" y="11" textLength="12.9" lengthAdjust="spacingAndGlyphs">200</text>
<text x="416" y="11" textLength="12.9" lengthAdjust="spacingAndGlyphs">300</text>
<text x="460" y="11" textLength="12.9" lengthAdjust="spacingAndGlyphs">400</text>
<text x="504" y="11" textLength="12.9" lengthAdjust="spacingAndGlyphs">500</text>
<text x="548" y="11" textLength="12.9" lengthAdjust="spacingAndGlyphs">600</text>
<text x="592" y="11" textLength="12.9" lengthAdjust="spacingAndGlyphs">700</text>
<text x="636" y="11" textLength="12.9" lengthAdjust="spacingAndGlyphs">800</text>
<text x="681" y="11" textLength="12.9" lengthAdjust="spacingAndGlyphs">900</text>
<text x="725" y="11" textLength="17.2" lengthAdjust="spacingAndGlyphs">1000</text>
<text x="769" y="11" textLength="17.2" lengthAdjust="spacingAndGlyphs">1100</text>
<text x="813" y="11" textLength="17.2" lengthAdjust="spacingAndGlyphs">1200</text>
<text x="857" y="11" textLength="17.2" lengthAdjust="spacingAndGlyphs">1300</text>
</g></svg>
<svg id="vruler" style="left:35px;top:95px" width="15" height="505" viewBox="0 0 15 505" shape-rendering="crispEdges">
<rect width="15" height="505" fill="#484848"/>
<rect x="14" y="0" width="1" height="505" fill="#5e5e5e"/>
<path d="M11 0.5H14 M12 5.5H14 M11 9.5H14 M10 13.5H14 M11 18.5H14 M12 22.5H14 M11 27.5H14 M12 31.5H14 M0 36.5H14 M12 40.5H14 M11 44.5H14 M12 49.5H14 M11 53.5H14 M10 58.5H14 M11 62.5H14 M12 66.5H14 M11 71.5H14 M12 75.5H14 M0 80.5H14 M12 84.5H14 M11 89.5H14 M12 93.5H14 M11 97.5H14 M10 102.5H14 M11 106.5H14 M12 111.5H14 M11 115.5H14 M12 119.5H14 M0 124.5H14 M12 128.5H14 M11 133.5H14 M12 137.5H14 M11 142.5H14 M10 146.5H14 M11 150.5H14 M12 155.5H14 M11 159.5H14 M12 164.5H14 M0 168.5H14 M12 172.5H14 M11 177.5H14 M12 181.5H14 M11 186.5H14 M10 190.5H14 M11 195.5H14 M12 199.5H14 M11 203.5H14 M12 208.5H14 M0 212.5H14 M12 217.5H14 M11 221.5H14 M12 225.5H14 M11 230.5H14 M10 234.5H14 M11 239.5H14 M12 243.5H14 M11 248.5H14 M12 252.5H14 M0 256.5H14 M12 261.5H14 M11 265.5H14 M12 270.5H14 M11 274.5H14 M10 278.5H14 M11 283.5H14 M12 287.5H14 M11 292.5H14 M12 296.5H14 M0 301.5H14 M12 305.5H14 M11 309.5H14 M12 314.5H14 M11 318.5H14 M10 323.5H14 M11 327.5H14 M12 331.5H14 M11 336.5H14 M12 340.5H14 M0 345.5H14 M12 349.5H14 M11 354.5H14 M12 358.5H14 M11 362.5H14 M10 367.5H14 M11 371.5H14 M12 376.5H14 M11 380.5H14 M12 384.5H14 M0 389.5H14 M12 393.5H14 M11 398.5H14 M12 402.5H14 M11 407.5H14 M10 411.5H14 M11 415.5H14 M12 420.5H14 M11 424.5H14 M12 429.5H14 M0 433.5H14 M12 437.5H14 M11 442.5H14 M12 446.5H14 M11 451.5H14 M10 455.5H14 M11 460.5H14 M12 464.5H14 M11 468.5H14 M12 473.5H14 M0 477.5H14 M12 482.5H14 M11 486.5H14 M12 490.5H14 M11 495.5H14 M10 499.5H14 M11 504.5H14" stroke="#6a6a6a" stroke-width="1" fill="none"/>
<g font-family="Liberation Sans, sans-serif" font-size="9.5" fill="#c0c0c0" shape-rendering="auto">
<text x="1" y="8.8" textLength="4.3" lengthAdjust="spacingAndGlyphs">0</text>
<text x="1" y="17.4" textLength="4.3" lengthAdjust="spacingAndGlyphs">0</text>
<text x="1" y="45.2" textLength="4.3" lengthAdjust="spacingAndGlyphs">0</text>
<text x="1" y="89.2" textLength="4.3" lengthAdjust="spacingAndGlyphs">1</text>
<text x="1" y="97.8" textLength="4.3" lengthAdjust="spacingAndGlyphs">0</text>
<text x="1" y="106.4" textLength="4.3" lengthAdjust="spacingAndGlyphs">0</text>
<text x="1" y="133.2" textLength="4.3" lengthAdjust="spacingAndGlyphs">2</text>
<text x="1" y="141.8" textLength="4.3" lengthAdjust="spacingAndGlyphs">0</text>
<text x="1" y="150.4" textLength="4.3" lengthAdjust="spacingAndGlyphs">0</text>
<text x="1" y="177.2" textLength="4.3" lengthAdjust="spacingAndGlyphs">3</text>
<text x="1" y="185.8" textLength="4.3" lengthAdjust="spacingAndGlyphs">0</text>
<text x="1" y="194.4" textLength="4.3" lengthAdjust="spacingAndGlyphs">0</text>
<text x="1" y="221.2" textLength="4.3" lengthAdjust="spacingAndGlyphs">4</text>
<text x="1" y="229.8" textLength="4.3" lengthAdjust="spacingAndGlyphs">0</text>
<text x="1" y="238.4" textLength="4.3" lengthAdjust="spacingAndGlyphs">0</text>
<text x="1" y="265.2" textLength="4.3" lengthAdjust="spacingAndGlyphs">5</text>
<text x="1" y="273.8" textLength="4.3" lengthAdjust="spacingAndGlyphs">0</text>
<text x="1" y="282.4" textLength="4.3" lengthAdjust="spacingAndGlyphs">0</text>
<text x="1" y="310.2" textLength="4.3" lengthAdjust="spacingAndGlyphs">6</text>
<text x="1" y="318.8" textLength="4.3" lengthAdjust="spacingAndGlyphs">0</text>
<text x="1" y="327.4" textLength="4.3" lengthAdjust="spacingAndGlyphs">0</text>
<text x="1" y="354.2" textLength="4.3" lengthAdjust="spacingAndGlyphs">7</text>
<text x="1" y="362.8" textLength="4.3" lengthAdjust="spacingAndGlyphs">0</text>
<text x="1" y="371.4" textLength="4.3" lengthAdjust="spacingAndGlyphs">0</text>
<text x="1" y="398.2" textLength="4.3" lengthAdjust="spacingAndGlyphs">8</text>
<text x="1" y="406.8" textLength="4.3" lengthAdjust="spacingAndGlyphs">0</text>
<text x="1" y="415.4" textLength="4.3" lengthAdjust="spacingAndGlyphs">0</text>
<text x="1" y="442.2" textLength="4.3" lengthAdjust="spacingAndGlyphs">9</text>
<text x="1" y="450.8" textLength="4.3" lengthAdjust="spacingAndGlyphs">0</text>
<text x="1" y="459.4" textLength="4.3" lengthAdjust="spacingAndGlyphs">0</text>
<text x="1" y="486.2" textLength="4.3" lengthAdjust="spacingAndGlyphs">1</text>
<text x="1" y="494.8" textLength="4.3" lengthAdjust="spacingAndGlyphs">0</text>
<text x="1" y="503.4" textLength="4.3" lengthAdjust="spacingAndGlyphs">0</text>
<text x="1" y="512.0" textLength="4.3" lengthAdjust="spacingAndGlyphs">0</text>
</g></svg>
<!--/RULERS-->
<div id="canvasbg" style="left:50px;top:95px;width:884px;height:505px;background:#282828"></div>
<div id="vscroll" style="left:934px;top:80px;width:13px;height:520px;background:#4d4d4d"></div>
<div style="left:947px;top:56px;width:3px;height:544px;background:#3c3c3c"></div>
<svg id="art" style="left:315px;top:130px" width="354" height="442" viewBox="315 130 354 442">
<defs><filter id="b1" x="-10%" y="-10%" width="120%" height="120%"><feGaussianBlur stdDeviation="1.1"/></filter><filter id="b2" x="-20%" y="-20%" width="140%" height="140%"><feGaussianBlur stdDeviation="2.2"/></filter><filter id="b4" x="-30%" y="-30%" width="160%" height="160%"><feGaussianBlur stdDeviation="5"/></filter>
<filter id="hairf" x="-10%" y="-10%" width="120%" height="120%"><feTurbulence type="fractalNoise" baseFrequency="0.45" numOctaves="2" seed="3" result="n"/><feDisplacementMap in="SourceGraphic" in2="n" scale="5" xChannelSelector="R" yChannelSelector="G" result="d"/><feGaussianBlur in="d" stdDeviation="0.9"/></filter><filter id="speck" x="0" y="0" width="100%" height="100%"><feTurbulence type="fractalNoise" baseFrequency="0.9" numOctaves="1" seed="7" result="n"/><feColorMatrix in="n" type="matrix" values="0 0 0 0 1  0 0 0 0 1  0 0 0 0 1  3.2 0 0 0 -2.05" result="m"/><feComposite in="m" in2="SourceGraphic" operator="in"/></filter><filter id="wob" x="-2%" y="-2%" width="104%" height="104%"><feTurbulence type="fractalNoise" baseFrequency="0.06" numOctaves="2" seed="11" result="n"/><feDisplacementMap in="SourceGraphic" in2="n" scale="3.2" xChannelSelector="R" yChannelSelector="G"/></filter></defs>
<rect x="315" y="130" width="354" height="442" fill="#fff"/>
<path d="M519 322.5 C519.5 318.7 521.5 315.8 524 312 C526.5 308.2 530.0 303.7 534 300 C538.0 296.3 543.3 293.0 548 290 C552.7 287.0 556.7 284.3 562 282 C567.3 279.7 575.0 275.0 580 276 C585.0 277.0 589.0 283.0 592 288 C595.0 293.0 596.7 299.7 598 306 C599.3 312.3 601.5 319.5 600 326 C598.5 332.5 593.2 339.1 589 345 C584.8 350.9 579.5 356.7 575 361.7 C570.5 366.7 565.2 371.0 561.7 375 C558.2 379.0 557.3 379.9 554 385.5 C550.7 391.1 546.5 400.4 541.8 408.3 C537.1 416.2 531.5 424.1 526 432.8 C520.5 441.6 512.9 455.3 508.5 460.8 C504.1 466.3 502.4 465.4 499.8 466 C497.2 466.6 493.4 469.0 492.8 464.3 C492.2 459.6 494.4 447.9 496.3 438 C498.2 428.1 501.8 414.0 504.3 404.8 C506.8 395.6 507.8 388.1 511.3 382.7 C514.8 377.3 523.4 377.0 525.3 372.2 C527.2 367.4 523.2 360.2 522.5 354 C521.8 347.8 521.4 340.1 520.8 334.8 C520.2 329.6 518.5 326.3 519 322.5Z" fill="#f6e2d8" opacity="0.9" filter="url(#b1)"/>
<path d="M559.0 275.0 C558.7 271.0 560.2 263.3 562.0 259.0 C563.8 254.7 566.7 251.5 570.0 249.0 C573.3 246.5 578.7 244.3 582.0 244.0 C585.3 243.7 588.1 244.5 590.0 247.0 C591.9 249.5 593.1 254.3 593.6 259.0 C594.1 263.7 593.9 270.3 593.0 275.0 C592.1 279.7 590.5 284.0 588.0 287.0 C585.5 290.0 581.0 291.7 578.0 293.0 C575.0 294.3 572.3 296.7 570.0 295.0 C567.7 293.3 565.8 286.3 564.0 283.0 C562.2 279.7 559.3 279.0 559.0 275.0Z" fill="#f6e6e0" opacity="0.9" filter="url(#b1)"/>
<ellipse cx="582" cy="336" rx="8" ry="5" transform="rotate(0 582 336)" fill="#e6b096" opacity="0.8" filter="url(#b2)"/>
<ellipse cx="526" cy="410" rx="4" ry="13" transform="rotate(27 526 410)" fill="#dfa283" opacity="0.8" filter="url(#b2)"/>
<ellipse cx="545" cy="303" rx="7" ry="4" transform="rotate(-30 545 303)" fill="#dba48c" opacity="0.6" filter="url(#b2)"/>
<ellipse cx="512" cy="445" rx="3" ry="10" transform="rotate(20 512 445)" fill="#ecc0a8" opacity="0.7" filter="url(#b2)"/>
<ellipse cx="560" cy="330" rx="9" ry="14" transform="rotate(20 560 330)" fill="#fbeee8" opacity="0.8" filter="url(#b2)"/>
<path d="M471.0 238.0 C472.2 234.7 476.3 231.6 480.0 229.0 C483.7 226.4 489.3 223.3 493.0 222.6 C496.7 221.9 499.6 223.2 502.4 224.6 C505.2 226.0 507.1 229.1 510.0 231.0 C512.9 232.9 516.9 233.7 520.0 236.0 C523.1 238.3 526.1 242.2 528.4 245.0 C530.7 247.8 532.3 250.5 534.0 253.0 C535.7 255.5 536.7 256.3 538.4 260.0 C540.1 263.7 544.1 270.5 544.0 275.0 C543.9 279.5 540.3 283.7 538.0 287.0 C535.7 290.3 533.7 292.7 530.0 295.0 C526.3 297.3 521.0 299.7 516.0 301.0 C511.0 302.3 504.3 303.3 500.0 303.0 C495.7 302.7 493.3 300.3 490.0 299.0 C486.7 297.7 482.3 296.7 480.0 295.0 C477.7 293.3 476.3 290.8 476.0 289.0 C475.7 287.2 478.3 285.3 478.0 284.0 C477.7 282.7 476.2 282.4 474.0 281.0 C471.8 279.6 465.7 277.4 465.0 275.4 C464.3 273.4 468.2 271.7 470.0 269.0 C471.8 266.3 475.5 262.3 476.0 259.0 C476.5 255.7 473.8 252.5 473.0 249.0 C472.2 245.5 469.8 241.3 471.0 238.0Z" fill="#e9b892" filter="url(#b1)"/>
<path d="M493.0 224.0 C493.7 222.1 499.6 224.1 502.4 225.4 C505.2 226.7 507.2 230.1 510.0 232.0 C512.8 233.9 518.0 234.8 519.0 237.0 C520.0 239.2 518.2 243.7 516.0 245.0 C513.8 246.3 509.0 246.3 506.0 245.0 C503.0 243.7 500.2 240.5 498.0 237.0 C495.8 233.5 492.3 225.9 493.0 224.0Z" fill="#f0cf9e" filter="url(#b1)"/>
<path d="M472.0 239.0 C472.0 237.0 476.7 232.5 480.0 230.0 C483.3 227.5 489.2 223.2 492.0 224.0 C494.8 224.8 497.3 231.8 497.0 235.0 C496.7 238.2 492.8 241.8 490.0 243.0 C487.2 244.2 483.0 242.7 480.0 242.0 C477.0 241.3 472.0 241.0 472.0 239.0Z" fill="#d49a72" filter="url(#b1)"/>
<path d="M510.0 241.0 C511.3 238.5 516.8 236.2 520.0 237.0 C523.2 237.8 526.5 243.0 529.0 246.0 C531.5 249.0 533.5 252.6 535.0 255.0 C536.5 257.4 538.8 259.8 538.0 260.6 C537.2 261.4 533.3 260.3 530.0 260.0 C526.7 259.7 521.0 260.3 518.0 259.0 C515.0 257.7 513.3 255.0 512.0 252.0 C510.7 249.0 508.7 243.5 510.0 241.0Z" fill="#c9906c" filter="url(#b1)"/>
<path d="M510.0 289.0 C515.3 286.7 525.0 283.3 530.0 281.0 C535.0 278.7 537.7 274.7 540.0 275.0 C542.3 275.3 544.7 279.7 544.0 283.0 C543.3 286.3 540.3 291.7 536.0 295.0 C531.7 298.3 523.7 301.7 518.0 303.0 C512.3 304.3 505.3 304.3 502.0 303.0 C498.7 301.7 496.7 297.3 498.0 295.0 C499.3 292.7 504.7 291.3 510.0 289.0Z" fill="#f4ddd0" filter="url(#b1)"/>
<path d="M480.0 258.0 C482.7 256.5 485.3 258.5 487.0 261.0 C488.7 263.5 490.2 270.0 490.0 273.0 C489.8 276.0 488.7 278.0 486.0 279.0 C483.3 280.0 477.3 279.7 474.0 279.0 C470.7 278.3 466.5 276.5 466.0 275.0 C465.5 273.5 468.7 272.8 471.0 270.0 C473.3 267.2 477.3 259.5 480.0 258.0Z" fill="#e2a27c" filter="url(#b1)"/>
<path d="M480.4 257.4 L475.0 265.0 L470.0 273.0 L466.4 275.0" stroke="#e85a44" stroke-width="2.2" fill="none" stroke-linecap="round" filter="url(#b1)" opacity="0.9"/>
<path d="M474.0 278.6 C476.0 277.8 485.8 277.7 488.0 278.6 C490.2 279.5 489.2 283.2 487.2 284.0 C485.2 284.8 478.2 284.3 476.0 283.4 C473.8 282.5 472.0 279.4 474.0 278.6Z" fill="#e27460" filter="url(#b1)"/>
<path d="M469.6 237.4 C470.6 236.4 475.2 239.3 478.0 240.6 C480.8 241.9 483.0 244.0 486.4 245.0 C489.8 246.0 494.7 245.4 498.4 246.6 C502.1 247.8 506.3 249.6 508.4 252.2 C510.5 254.8 511.9 260.1 510.8 262.2 C509.7 264.3 504.3 265.5 501.6 265.0 C498.9 264.5 497.4 261.3 494.4 259.4 C491.4 257.5 487.3 255.9 483.6 253.8 C479.9 251.7 474.3 249.3 472.0 246.6 C469.7 243.9 468.6 238.4 469.6 237.4Z" fill="#6a352a" filter="url(#b1)"/>
<path d="M495.0 255.0 C496.3 254.7 502.6 256.8 505.0 258.0 C507.4 259.2 510.1 261.2 509.6 262.2 C509.1 263.2 504.1 264.4 502.0 264.0 C499.9 263.6 498.2 261.5 497.0 260.0 C495.8 258.5 493.7 255.3 495.0 255.0Z" fill="#3e2024" filter="url(#b1)"/>
<path d="M500.0 250.6 C501.3 249.8 509.6 249.7 512.0 250.6 C514.4 251.5 515.7 255.4 514.4 256.2 C513.1 257.0 506.8 256.3 504.4 255.4 C502.0 254.5 498.7 251.4 500.0 250.6Z" fill="#d9a432" filter="url(#b1)"/>
<path d="M491.0 267.4 C492.9 265.8 499.5 265.2 504.0 264.0 C508.5 262.8 512.8 260.6 518.0 260.0 C523.2 259.4 531.9 259.8 535.0 260.6 C538.1 261.4 537.7 263.3 536.4 265.0 C535.1 266.7 530.1 268.9 527.0 270.6 C523.9 272.3 521.1 273.1 518.0 275.0 C514.9 276.9 511.6 281.5 508.4 282.2 C505.2 282.9 501.7 280.5 499.0 279.0 C496.3 277.5 493.7 275.3 492.4 273.4 C491.1 271.5 489.1 269.0 491.0 267.4Z" fill="#e8c031" filter="url(#b1)"/>
<path d="M493.0 279.4 C495.0 279.0 504.1 283.6 508.4 283.0 C512.7 282.4 516.8 276.2 519.0 275.6 C521.2 275.0 522.7 277.3 521.6 279.4 C520.5 281.5 516.6 287.2 512.4 288.2 C508.2 289.2 499.6 286.9 496.4 285.4 C493.2 283.9 491.0 279.8 493.0 279.4Z" fill="#e8907c" filter="url(#b1)"/>
<path d="M514.0 290.2 C515.8 288.5 525.3 283.7 528.0 283.0 C530.7 282.3 532.2 284.5 530.4 286.2 C528.6 287.9 519.9 292.7 517.2 293.4 C514.5 294.1 512.2 291.9 514.0 290.2Z" fill="#b87a54" filter="url(#b1)"/>
<path d="M498.0 289.0 C500.5 288.2 507.7 289.0 510.0 290.0 C512.3 291.0 513.5 293.5 512.0 295.0 C510.5 296.5 503.8 299.0 501.0 299.0 C498.2 299.0 495.5 296.7 495.0 295.0 C494.5 293.3 495.5 289.8 498.0 289.0Z" fill="#c98a66" filter="url(#b1)"/>
<path d="M482.0 293.4 C483.7 292.9 492.5 293.7 494.4 294.6 C496.3 295.5 495.3 298.1 493.6 298.6 C491.9 299.1 485.9 298.3 484.0 297.4 C482.1 296.5 480.3 293.9 482.0 293.4Z" fill="#d4a040" filter="url(#b1)"/>
<path d="M476.0 288.0 C476.3 287.4 480.7 291.8 482.0 293.4 C483.3 295.0 481.3 296.3 484.0 297.4 C486.7 298.5 495.3 298.1 498.0 300.0 C500.7 301.9 500.0 305.2 500.0 309.0 C500.0 312.8 500.3 320.5 498.0 323.0 C495.7 325.5 488.5 326.0 486.0 324.0 C483.5 322.0 484.0 315.5 483.0 311.0 C482.0 306.5 481.2 300.8 480.0 297.0 C478.8 293.2 475.7 288.6 476.0 288.0Z" fill="#f3d9cc" filter="url(#b1)"/>
<path d="M538.0 303.0 C539.7 300.0 547.8 295.3 550.0 295.0 C552.2 294.7 552.7 298.0 551.0 301.0 C549.3 304.0 542.2 312.7 540.0 313.0 C537.8 313.3 536.3 306.0 538.0 303.0Z" fill="#dcae98" opacity="0.7" filter="url(#b2)"/>
<path d="M435.0 220.0 C434.8 215.5 435.5 211.9 437.4 208.0 C439.3 204.1 443.9 200.5 446.4 196.6 C448.9 192.7 450.3 188.2 452.4 184.6 C454.5 181.0 456.1 177.6 459.0 175.0 C461.9 172.4 466.0 170.8 469.5 169.0 C473.0 167.2 475.8 166.0 480.0 164.5 C484.2 163.0 490.5 161.8 495.0 160.0 C499.5 158.2 502.5 155.6 507.0 154.0 C511.5 152.4 516.5 151.3 522.0 150.4 C527.5 149.5 534.0 148.7 540.0 148.6 C546.0 148.5 552.0 148.9 558.0 149.8 C564.0 150.7 570.5 152.3 576.0 154.0 C581.5 155.7 586.5 157.8 591.0 160.0 C595.5 162.2 600.0 164.5 603.0 167.5 C606.0 170.5 607.0 174.2 609.0 178.0 C611.0 181.8 613.0 185.5 615.0 190.0 C617.0 194.5 619.1 200.0 621.0 205.0 C622.9 210.0 625.4 215.8 626.4 220.0 C627.4 224.2 627.8 227.2 627.0 230.5 C626.2 233.8 623.4 236.5 621.6 239.5 C619.9 242.5 617.9 245.2 616.5 248.5 C615.1 251.8 614.4 255.2 613.5 259.0 C612.6 262.8 612.2 267.2 611.4 271.0 C610.5 274.8 609.7 279.0 608.4 281.5 C607.1 284.0 605.1 286.4 603.6 286.0 C602.1 285.6 600.6 282.4 599.4 279.4 C598.2 276.4 597.3 271.9 596.4 268.0 C595.5 264.1 595.0 259.2 594.0 256.0 C593.0 252.8 592.1 250.3 590.4 248.5 C588.6 246.7 586.1 244.9 583.5 244.9 C580.9 244.9 577.2 246.7 574.5 248.5 C571.8 250.3 569.0 253.2 567.0 256.0 C565.0 258.8 563.6 262.0 562.5 265.0 C561.4 268.0 561.6 271.9 560.4 274.0 C559.1 276.1 557.1 277.7 555.0 277.6 C552.9 277.5 549.8 275.5 547.5 273.4 C545.2 271.3 543.0 267.6 541.5 265.0 C540.0 262.4 540.2 260.0 538.5 257.5 C536.8 255.0 533.8 252.5 531.0 250.0 C528.2 247.5 525.2 245.2 522.0 242.5 C518.8 239.8 515.0 236.3 511.5 233.5 C508.0 230.7 504.0 227.2 501.0 225.4 C498.0 223.7 496.2 222.7 493.5 223.0 C490.8 223.3 487.5 225.5 484.5 227.5 C481.5 229.5 477.9 232.7 475.5 235.0 C473.1 237.3 471.4 239.1 470.4 241.6 C469.4 244.1 469.1 247.1 469.5 250.0 C469.9 252.9 472.2 256.2 472.5 259.0 C472.8 261.8 472.8 265.5 471.0 266.5 C469.2 267.5 465.0 266.5 462.0 265.0 C459.0 263.5 455.8 260.5 453.0 257.5 C450.2 254.5 447.9 250.8 445.5 247.0 C443.1 243.2 440.4 239.5 438.6 235.0 C436.9 230.5 435.2 224.5 435.0 220.0Z" fill="#907ca2" filter="url(#hairf)"/>
<path d="M435.0 220.0 C434.8 215.5 435.5 211.9 437.4 208.0 C439.3 204.1 443.9 200.5 446.4 196.6 C448.9 192.7 450.3 188.2 452.4 184.6 C454.5 181.0 456.1 177.6 459.0 175.0 C461.9 172.4 466.0 170.8 469.5 169.0 C473.0 167.2 475.8 166.0 480.0 164.5 C484.2 163.0 490.5 161.8 495.0 160.0 C499.5 158.2 502.5 155.6 507.0 154.0 C511.5 152.4 516.5 151.3 522.0 150.4 C527.5 149.5 534.0 148.7 540.0 148.6 C546.0 148.5 552.0 148.9 558.0 149.8 C564.0 150.7 570.5 152.3 576.0 154.0 C581.5 155.7 586.5 157.8 591.0 160.0 C595.5 162.2 600.0 164.5 603.0 167.5 C606.0 170.5 607.0 174.2 609.0 178.0 C611.0 181.8 613.0 185.5 615.0 190.0 C617.0 194.5 619.1 200.0 621.0 205.0 C622.9 210.0 625.4 215.8 626.4 220.0 C627.4 224.2 627.8 227.2 627.0 230.5 C626.2 233.8 623.4 236.5 621.6 239.5 C619.9 242.5 617.9 245.2 616.5 248.5 C615.1 251.8 614.4 255.2 613.5 259.0 C612.6 262.8 612.2 267.2 611.4 271.0 C610.5 274.8 609.7 279.0 608.4 281.5 C607.1 284.0 605.1 286.4 603.6 286.0 C602.1 285.6 600.6 282.4 599.4 279.4 C598.2 276.4 597.3 271.9 596.4 268.0 C595.5 264.1 595.0 259.2 594.0 256.0 C593.0 252.8 592.1 250.3 590.4 248.5 C588.6 246.7 586.1 244.9 583.5 244.9 C580.9 244.9 577.2 246.7 574.5 248.5 C571.8 250.3 569.0 253.2 567.0 256.0 C565.0 258.8 563.6 262.0 562.5 265.0 C561.4 268.0 561.6 271.9 560.4 274.0 C559.1 276.1 557.1 277.7 555.0 277.6 C552.9 277.5 549.8 275.5 547.5 273.4 C545.2 271.3 543.0 267.6 541.5 265.0 C540.0 262.4 540.2 260.0 538.5 257.5 C536.8 255.0 533.8 252.5 531.0 250.0 C528.2 247.5 525.2 245.2 522.0 242.5 C518.8 239.8 515.0 236.3 511.5 233.5 C508.0 230.7 504.0 227.2 501.0 225.4 C498.0 223.7 496.2 222.7 493.5 223.0 C490.8 223.3 487.5 225.5 484.5 227.5 C481.5 229.5 477.9 232.7 475.5 235.0 C473.1 237.3 471.4 239.1 470.4 241.6 C469.4 244.1 469.1 247.1 469.5 250.0 C469.9 252.9 472.2 256.2 472.5 259.0 C472.8 261.8 472.8 265.5 471.0 266.5 C469.2 267.5 465.0 266.5 462.0 265.0 C459.0 263.5 455.8 260.5 453.0 257.5 C450.2 254.5 447.9 250.8 445.5 247.0 C443.1 243.2 440.4 239.5 438.6 235.0 C436.9 230.5 435.2 224.5 435.0 220.0Z" fill="#fff" filter="url(#speck)" opacity="0.4"/>
<path d="M480.0 295.0 L483.0 311.0 L485.0 323.0 L500.0 327.0 L516.0 321.0 L534.0 311.0 L550.0 295.0 M476.0 288.6 L483.0 295.0 L496.0 295.4 L499.0 300.0 M480.0 300.0 L493.0 303.0 L499.0 309.0 M483.0 311.0 L493.0 309.0 M499.0 300.0 L510.0 309.0 L522.0 303.0 L544.0 295.0 M499.0 309.0 L510.0 316.0 L530.0 309.0 M559.0 275.0 L562.0 259.0 L570.0 249.0 L582.0 244.0 L590.0 247.0 L593.6 259.0 L593.0 275.0 L588.0 287.0 L578.0 293.0 L570.0 295.0 M574.0 251.0 L582.0 249.0 L588.0 255.0 L578.0 267.0 L582.0 273.0 M562.0 275.0 L565.0 284.0 L572.0 285.0 L570.0 295.0 L578.0 309.0 L582.0 323.0 M568.0 261.0 L575.0 264.0 L578.0 275.0 M518.6 323.4 L523.4 342.4 L525.8 361.5 L530.5 375.8 M537.7 328.1 L532.9 352.0 L529.3 371.0 M572.2 294.8 L568.7 304.3 L583.0 329.3 L592.5 311.5 L594.9 290.0 M592.5 312.6 L602.0 328.1 L608.0 324.6 L625.9 343.6 L610.4 384.2 L574.6 381.8 L586.5 393.7 M625.9 347.2 L649.7 366.3 M609.2 324.6 L619.9 332.9 L633.0 332.9 L640.2 331.7 L644.9 334.1 L661.6 341.3 L667.6 352.0 L668.3 371.0 M644.9 334.1 L654.5 363.9 L661.6 363.9 L668.3 371.0 M649.7 366.3 L633.0 373.4 L618.7 384.2 L609.2 392.5 L594.9 394.9 L573.4 406.8 L556.7 412.8 L535.3 427.1 L531.7 433.0 M490.0 355.6 L504.3 347.2 L521.0 337.7 M490.0 380.6 L513.8 366.3 L523.4 362.7 L525.8 373.4 L512.6 380.6 L507.9 394.9 L501.9 414.0 L494.8 433.0 M529.3 371.0 L541.3 380.6 L549.6 386.5 L568.7 381.8 L600.8 331.7 M579.4 382.5 L584.2 387.7 M584.6 382.5 L589.4 387.7 M589.9 382.5 L594.6 387.7 M595.1 382.5 L599.9 387.7 M600.4 382.5 L605.1 387.7 M605.6 382.5 L610.4 387.7 M507.2 394.9 L499.5 398.5 M505.7 400.1 L498.3 403.7 M504.3 405.4 L497.2 409.0 M502.9 410.6 L496.0 414.2 M501.4 415.9 L494.8 419.4 M500.0 421.1 L493.6 424.7 M498.6 426.4 L492.4 429.9 M523.4 330.5 L529.3 334.1 M523.4 336.5 L529.3 340.5 M523.4 342.4 L529.3 346.7 M524.6 348.4 L530.0 352.5 M544.8 354.4 L556.7 349.6 M546.0 359.1 L559.1 352.5 M549.6 361.5 L560.3 360.3 M538.9 375.8 L543.6 383.0 M543.6 373.4 L547.2 380.6 M537.7 316.2 L547.2 309.1 M541.3 318.6 L549.6 312.6 M497.2 322.2 L498.3 325.8 M501.9 322.9 L503.1 326.2 M506.7 321.0 L507.9 325.3 M338.8 395.3 L346.0 378.6 L357.9 365.5 L381.7 360.7 L391.3 369.1 L398.4 376.2 L406.8 385.8 L408.0 394.1 L415.1 398.9 L410.4 402.4 L403.2 401.3 L391.3 410.8 L386.5 408.4 L391.3 417.9 L381.7 433.4 L374.6 450.1 L373.4 458.5 L368.6 466.8 M337.6 403.6 L335.3 421.5 L330.5 440.6 L328.1 459.7 L331.7 478.7 L338.8 493.0 M369.8 377.4 L377.0 371.5 L388.9 372.6 L396.0 381.0 L405.6 394.1 M371.0 398.9 L379.4 385.8 L386.5 386.9 L396.0 394.1 M371.0 398.9 L374.1 406.7 M355.5 379.8 L357.9 388.1 M343.6 414.4 L353.1 392.9 L369.8 377.4 M341.2 441.8 L359.1 415.6 M357.9 431.0 L371.0 421.5 M362.7 438.2 L372.2 431.0 M356.7 457.3 L374.6 439.4 M348.4 481.1 L366.3 462.0 M324.5 462.0 L332.9 488.3 L338.8 493.0 M323.3 464.4 L324.5 478.7 M368.6 466.8 L379.4 478.7 L393.7 493.0 M505.7 350.0 L481.9 361.9 L467.6 378.6 L448.5 388.1 L453.3 397.7 L460.4 412.0 L459.2 420.3 L472.3 433.4 M459.2 420.3 L439.0 445.4 L427.0 474.0 L417.5 493.0 M469.9 407.2 L479.5 401.3 L472.3 412.0 M486.6 395.3 L479.5 412.0 L472.3 428.7 L472.3 435.8 L473.5 457.3 L477.1 483.5 L479.5 493.0 M464.0 434.6 L465.2 450.1 L468.8 462.0 M467.6 445.4 L471.1 464.4 M458.0 450.1 L443.7 474.0 L434.2 493.0 M460.4 457.3 L448.5 483.5 M505.7 397.7 L498.6 421.5 L493.8 445.4 L492.6 464.4 L481.9 488.3 M498.1 422.0 L505.7 417.7 M497.4 427.2 L505.2 422.9 M496.6 432.5 L504.7 428.2 M495.9 437.7 L504.3 433.4 M495.2 443.0 L503.8 438.7 M494.5 448.2 L503.3 443.9 M493.8 453.5 L502.8 449.2 M493.1 458.7 L502.4 454.4 M492.4 463.9 L501.9 459.7 M331.7 440.0 L324.5 463.8 L328.1 499.6 L332.9 518.7 L330.5 542.5 L329.3 559.2 L323.3 571.6 M323.3 463.8 L330.5 484.1 L341.2 496.0 L350.8 504.4 M324.5 466.2 L329.3 504.4 M369.8 466.2 L393.7 490.1 L398.4 499.6 L415.1 511.5 L439.0 530.6 L453.3 544.9 L467.6 556.8 L472.3 564.0 M369.8 466.2 L350.8 497.2 L354.3 518.7 M368.6 468.6 L372.2 456.7 L374.6 440.0 M350.8 525.8 L391.3 506.7 M355.5 490.1 L354.3 518.7 M366.3 490.1 L362.7 509.1 M372.2 485.3 L368.6 502.0 M377.0 491.3 L366.3 506.7 M375.8 512.7 L384.1 524.6 M380.6 507.9 L386.5 519.9 M386.5 503.2 L391.3 511.5 M369.8 530.6 L374.6 540.1 M362.7 542.5 L391.3 523.4 M346.0 478.1 L369.8 451.9 M357.9 456.7 L369.8 444.8 M338.8 528.2 L341.2 544.9 M336.5 530.6 L338.8 542.5 M347.2 552.0 L338.8 561.6 M353.1 542.5 L350.8 554.4 M359.1 540.1 L360.3 556.8 M398.4 516.3 L406.8 531.8 M393.7 535.4 L397.2 544.9 M385.3 549.7 L387.7 554.4 M402.0 524.6 L405.6 535.4 M418.7 521.0 L434.2 554.4 M419.9 528.2 L435.4 556.8 M406.8 499.6 L427.0 478.1 L436.6 454.3 L444.9 440.0 M419.9 506.7 L439.0 478.1 L458.0 449.5 M422.3 511.5 L443.7 485.3 L460.4 456.7 M429.4 513.9 L437.8 523.4 L441.3 480.5 M431.8 499.6 L448.5 471.0 M444.9 533.0 L448.5 475.8 L460.4 473.4 M462.8 440.0 L466.4 461.5 M471.1 440.0 L473.5 454.3 L479.5 494.8 L467.6 518.7 M465.2 449.5 L468.8 466.2 M479.5 494.8 L505.7 471.0 M465.2 525.8 L481.9 499.6 L505.7 478.1 M484.2 548.5 L505.7 523.4 M464.0 552.0 L468.8 571.6 M543.0 420.0 L533.5 432.2 L526.7 444.5 L544.4 454.0 L571.5 462.1 L598.7 468.4 L612.3 463.5 L631.3 452.6 L647.7 436.3 L664.0 420.0 M628.6 460.8 L642.2 468.9 L655.8 478.4 L664.0 490.7 M655.8 478.4 L661.2 496.1 L661.2 508.3 M650.4 444.5 L668.0 467.6 M630.0 511.1 L632.7 534.2 L630.0 553.2 M659.9 536.9 L653.1 553.2 M591.9 483.9 L570.2 517.9 M589.2 508.3 L574.3 532.8 M544.4 462.1 L525.3 488.0 L499.5 513.8 M551.2 475.7 L517.2 512.4 L490.0 541.0 M530.8 483.9 L519.9 523.3 L500.9 561.3 M547.1 494.7 L528.1 539.6 L510.4 571.7 M545.7 528.7 L530.8 557.3 M526.7 444.5 L509.0 468.9 L490.0 493.4" fill="none" stroke="#7c7373" stroke-width="0.72" stroke-linejoin="round" stroke-linecap="round" opacity="0.95" filter="url(#wob)"/>
</svg><!--/ART-->
<!-- RIGHT DOCK -->
<div id="dock" style="left:950px;top:56px;width:218px;height:544px;background:#535353">
  <div style="left:0px;top:0px;width:218px;height:10px;background:#424242"></div>
  <svg style="left:204.5px;top:3px" width="7" height="5" viewBox="0 0 9 6"><path d="M0.6 0.6 L3.2 3 L0.6 5.4 M4.8 0.6 L7.4 3 L4.8 5.4" fill="none" stroke="#d8d8d8" stroke-width="1.2"/></svg>
  <div style="left:0px;top:10px;width:218px;height:24px;background:#424242"></div>
  <div style="left:0px;top:10px;width:36px;height:24px;background:#535353"></div>
  <span class="t" id="tab_zf" style="left:7px;top:16.5px;font-size:12px;color:#f4f4f4;">字符</span>
  <div style="left:36px;top:10px;width:21px;height:23px;overflow:hidden;border-right:1px solid #393939;border-left:1px solid #4a4a4a"><span class="t" style="left:7px;top:6.5px;font-size:10.5px;letter-spacing:-0.3px;color:#a4a4a4">段落</span><div style="right:0;top:0;width:5px;height:23px;background:linear-gradient(to right,rgba(66,66,66,0),#424242 85%)"></div></div>
  <div style="left:57px;top:10px;width:21px;height:23px;overflow:hidden;border-right:1px solid #393939;border-left:1px solid #4a4a4a"><span class="t" style="left:7px;top:6.5px;font-size:10.5px;letter-spacing:-0.3px;color:#a4a4a4">属性</span><div style="right:0;top:0;width:5px;height:23px;background:linear-gradient(to right,rgba(66,66,66,0),#424242 85%)"></div></div>
  <div style="left:78px;top:10px;width:20px;height:23px;overflow:hidden;border-right:1px solid #393939;border-left:1px solid #4a4a4a"><span class="t" style="left:7px;top:6.5px;font-size:10.5px;letter-spacing:-0.3px;color:#a4a4a4">历史记录</span><div style="right:0;top:0;width:5px;height:23px;background:linear-gradient(to right,rgba(66,66,66,0),#424242 85%)"></div></div>
  <div style="left:98px;top:10px;width:21px;height:23px;overflow:hidden;border-right:1px solid #393939;border-left:1px solid #4a4a4a"><span class="t" style="left:7px;top:6.5px;font-size:10.5px;letter-spacing:-0.3px;color:#a4a4a4">颜色</span><div style="right:0;top:0;width:5px;height:23px;background:linear-gradient(to right,rgba(66,66,66,0),#424242 85%)"></div></div>
  <div style="left:119px;top:10px;width:20px;height:23px;overflow:hidden;border-right:1px solid #393939;border-left:1px solid #4a4a4a"><span class="t" style="left:7px;top:6.5px;font-size:10.5px;letter-spacing:-0.3px;color:#a4a4a4">库</span><div style="right:0;top:0;width:0px;height:23px;background:linear-gradient(to right,rgba(66,66,66,0),#424242 85%)"></div></div>
  <div style="left:139px;top:10px;width:21px;height:23px;overflow:hidden;border-right:1px solid #393939;border-left:1px solid #4a4a4a"><span class="t" style="left:7px;top:6.5px;font-size:10.5px;letter-spacing:-0.3px;color:#a4a4a4">调整</span><div style="right:0;top:0;width:5px;height:23px;background:linear-gradient(to right,rgba(66,66,66,0),#424242 85%)"></div></div>
  <div style="left:160px;top:10px;width:24px;height:23px;overflow:hidden;border-right:1px solid #393939;border-left:1px solid #4a4a4a"><span class="t" style="left:7px;top:6.5px;font-size:10.5px;letter-spacing:-0.3px;color:#a4a4a4">色板</span><div style="right:0;top:0;width:5px;height:23px;background:linear-gradient(to right,rgba(66,66,66,0),#424242 85%)"></div></div>
  <svg style="left:203.5px;top:17.5px" width="9" height="8" viewBox="0 0 9 8"><path d="M0 0.5H9 M0 2.8H9 M0 5.1H9 M0 7.4H9" stroke="#bcbcbc" stroke-width="1"/></svg>
  <div style="left:4px;top:45.5px;width:101px;height:15.0px;background:#454545;border:1px solid #626262;border-radius:3px"></div>
  <div style="left:92px;top:46.5px;width:1px;height:13.0px;background:#626262"></div>
  <span class="t" id="c_arial" style="left:7px;top:48px;font-size:12px;color:#e6e6e6;">Arial</span>
  <svg style="left:94.5px;top:51.0px" width="8" height="5" viewBox="0 0 8 5"><path d="M0.7 0.7 L4 4 L7.3 0.7" fill="none" stroke="#cfcfcf" stroke-width="1.1"/></svg>
  <div style="left:121px;top:45.5px;width:62.5px;height:15.0px;background:#454545;border:1px solid #626262;border-radius:3px"></div>
  <div style="left:170px;top:46.5px;width:1px;height:13.0px;background:#626262"></div>
  <span class="t" id="c_regular" style="left:123px;top:48px;font-size:12px;color:#e6e6e6;">Regular</span>
  <svg style="left:173px;top:51.0px" width="8" height="5" viewBox="0 0 8 5"><path d="M0.7 0.7 L4 4 L7.3 0.7" fill="none" stroke="#cfcfcf" stroke-width="1.1"/></svg>
  <div style="left:21px;top:67.5px;width:71.5px;height:15.0px;background:#454545;border:1px solid #626262;border-radius:3px"></div>
  <div style="left:79.5px;top:68.5px;width:1px;height:13.0px;background:#626262"></div>
  <span class="t" id="c_152" style="left:24.5px;top:70px;font-size:12px;color:#e6e6e6;">152 像素</span>
  <svg style="left:82px;top:73.0px" width="8" height="5" viewBox="0 0 8 5"><path d="M0.7 0.7 L4 4 L7.3 0.7" fill="none" stroke="#cfcfcf" stroke-width="1.1"/></svg>
  <div style="left:117px;top:67.5px;width:66.5px;height:15.0px;background:#454545;border:1px solid #626262;border-radius:3px"></div>
  <div style="left:170px;top:68.5px;width:1px;height:13.0px;background:#626262"></div>
  <span class="t" id="c_339" style="left:119.5px;top:70px;font-size:12px;color:#e6e6e6;">339 像素</span>
  <svg style="left:173px;top:73.0px" width="8" height="5" viewBox="0 0 8 5"><path d="M0.7 0.7 L4 4 L7.3 0.7" fill="none" stroke="#cfcfcf" stroke-width="1.1"/></svg>
  <span class="t" style="left:2.5px;top:74px;font-size:9px;color:#e0e0e0;font-family:'Liberation Serif',serif;font-weight:bold">T</span>
  <span class="t" style="left:7px;top:66.5px;font-size:17px;color:#e0e0e0;font-family:'Liberation Serif',serif">T</span>
  <svg style="left:98px;top:67px" width="16" height="16" viewBox="0 0 16 16"><path d="M2.5 2.5V13.5 M0.6 4.6L2.5 2.2L4.4 4.6 M0.6 11.4L2.5 13.8L4.4 11.4" fill="none" stroke="#dcdcdc" stroke-width="1.1"/><text x="6" y="7" font-family="Liberation Serif, serif" font-size="8.5" fill="#dcdcdc">A</text><text x="5.4" y="15" font-family="Liberation Serif, serif" font-size="10" fill="#dcdcdc">A</text><path d="M5.5 7.8H15" stroke="#dcdcdc" stroke-width="0.9"/></svg>
  <div style="left:21px;top:86.5px;width:71.5px;height:15.0px;background:#454545;border:1px solid #626262;border-radius:3px"></div>
  <div style="left:79.5px;top:87.5px;width:1px;height:13.0px;background:#626262"></div>
  <svg style="left:82px;top:92.0px" width="8" height="5" viewBox="0 0 8 5"><path d="M0.7 0.7 L4 4 L7.3 0.7" fill="none" stroke="#cfcfcf" stroke-width="1.1"/></svg>
  <div style="left:117px;top:86.5px;width:66.5px;height:15.0px;background:#454545;border:1px solid #626262;border-radius:3px"></div>
  <div style="left:170px;top:87.5px;width:1px;height:13.0px;background:#626262"></div>
  <svg style="left:173px;top:92.0px" width="8" height="5" viewBox="0 0 8 5"><path d="M0.7 0.7 L4 4 L7.3 0.7" fill="none" stroke="#cfcfcf" stroke-width="1.1"/></svg>
  <span class="t" id="c_80" style="left:119.5px;top:89px;font-size:12px;color:#e6e6e6;">80</span>
  <span class="t" style="left:2.5px;top:86.5px;font-size:11px;color:#dcdcdc;letter-spacing:-0.8px">V/A</span>
  <svg style="left:7px;top:98px" width="11" height="5" viewBox="0 0 11 5"><path d="M2 2.5H11" stroke="#dcdcdc" stroke-width="1.2"/><path d="M3.4 0L0 2.5L3.4 5Z" fill="#dcdcdc"/></svg>
  <div style="left:99px;top:87.5px;width:15px;height:10px;background:#e4e4e4"></div>
  <span class="t" style="left:99.5px;top:87.5px;font-size:11px;color:#454545;font-weight:bold;letter-spacing:-1.2px">VA</span>
  <svg style="left:99px;top:99px" width="15" height="5" viewBox="0 0 15 5"><path d="M2 2.5H13" stroke="#dcdcdc" stroke-width="1.2"/><path d="M3 0L0 2.5L3 5Z M12 0L15 2.5L12 5Z" fill="#dcdcdc"/></svg>
  <div style="left:21px;top:105.5px;width:71.5px;height:15.0px;background:#454545;border:1px solid #626262;border-radius:3px"></div>
  <div style="left:79.5px;top:106.5px;width:1px;height:13.0px;background:#626262"></div>
  <svg style="left:82px;top:111.0px" width="8" height="5" viewBox="0 0 8 5"><path d="M0.7 0.7 L4 4 L7.3 0.7" fill="none" stroke="#cfcfcf" stroke-width="1.1"/></svg>
  <span class="t" id="c_0p" style="left:24.5px;top:108px;font-size:12px;color:#e6e6e6;">0%</span>
  <svg style="left:3px;top:104px" width="14" height="16" viewBox="0 0 14 16"><path d="M1.5 0V12 M12.5 0V12" stroke="#dcdcdc" stroke-width="1" stroke-dasharray="1 1"/><text x="3" y="9.5" font-family="Liberation Sans, sans-serif" font-size="9" fill="#dcdcdc">あ</text><path d="M3 14H11" stroke="#dcdcdc" stroke-width="1"/><path d="M3.6 12L1 14L3.6 16Z M10.4 12L13 14L10.4 16Z" fill="#dcdcdc"/></svg>
  <div style="left:21px;top:124.5px;width:46.5px;height:16.5px;background:#454545;border:1px solid #626262;border-radius:3px"></div>
  <span class="t" id="c_100a" style="left:24.5px;top:127.5px;font-size:12px;color:#e6e6e6;">100%</span>
  <svg style="left:2px;top:125px" width="6" height="16" viewBox="0 0 6 16"><path d="M3 2V14" stroke="#dcdcdc" stroke-width="1.1"/><path d="M0.4 4L3 0.6L5.6 4Z M0.4 12L3 15.4L5.6 12Z" fill="#dcdcdc"/></svg>
  <span class="t" style="left:8px;top:125px;font-size:16px;color:#e4e4e4;font-family:'Liberation Serif',serif;font-weight:bold">T</span>
  <div style="left:137px;top:124.5px;width:47px;height:16.5px;background:#454545;border:1px solid #626262;border-radius:3px"></div>
  <span class="t" id="c_100b" style="left:140px;top:127.5px;font-size:12px;color:#e6e6e6;">100%</span>
  <span class="t" style="left:122px;top:124px;font-size:15px;color:#e4e4e4;font-family:'Liberation Serif',serif;font-weight:bold">T</span>
  <svg style="left:119.5px;top:136.5px" width="16" height="5" viewBox="0 0 16 5"><path d="M2 2.5H14" stroke="#dcdcdc" stroke-width="1.1"/><path d="M3.2 0L0 2.5L3.2 5Z M12.8 0L16 2.5L12.8 5Z" fill="#dcdcdc"/></svg>
  <div style="left:21px;top:144.5px;width:46.5px;height:17.0px;background:#454545;border:1px solid #626262;border-radius:3px"></div>
  <span class="t" id="c_0px" style="left:24.5px;top:147.5px;font-size:12px;color:#e6e6e6;">0 像素</span>
  <span class="t" style="left:2.5px;top:145.5px;font-size:13px;color:#dcdcdc;text-decoration:underline">A</span>
  <span class="t" style="left:11px;top:144.5px;font-size:8px;color:#dcdcdc;">a</span>
  <svg style="left:11px;top:152px" width="6" height="9" viewBox="0 0 6 9"><path d="M3 1V8" stroke="#dcdcdc" stroke-width="1"/><path d="M0.4 3.4L3 0L5.6 3.4Z M0.4 5.6L3 9L5.6 5.6Z" fill="#dcdcdc"/></svg>
  <span class="t" id="c_color" style="left:107px;top:147px;font-size:12px;color:#e6e6e6;">颜色:</span>
  <div style="left:137px;top:144.5px;width:47.5px;height:18px;background:#c8764a;border:1px solid #3c3c3c"></div>
  <span class="t" style="left:2.1px;top:168.0px;width:40px;text-align:center;font-size:14px;color:#e8e8e8;font-family:'Liberation Serif',serif;font-weight:bold">T</span>
  <span class="t" style="left:22.7px;top:168.0px;width:40px;text-align:center;font-size:14px;color:#e8e8e8;font-family:'Liberation Serif',serif;font-style:italic">T</span>
  <span class="t" style="left:42.5px;top:168.8px;width:40px;text-align:center;font-size:12.5px;color:#e8e8e8;font-family:'Liberation Serif',serif;font-weight:bold;letter-spacing:-0.3px">TT</span>
  <span class="t" style="left:63.5px;top:168.5px;width:40px;text-align:center;font-size:13px;color:#e8e8e8;font-family:'Liberation Serif',serif;font-weight:bold">T<span style="position:static;font-size:9.5px">T</span></span>
  <span class="t" style="left:84.5px;top:168.0px;width:40px;text-align:center;font-size:14px;color:#e8e8e8;font-family:'Liberation Serif',serif;font-weight:bold">T<span style="position:static;font-size:7px;vertical-align:6px">1</span></span>
  <span class="t" style="left:104.9px;top:168.0px;width:40px;text-align:center;font-size:14px;color:#e8e8e8;font-family:'Liberation Serif',serif;font-weight:bold">T<span style="position:static;font-size:7px;vertical-align:-2px">1</span></span>
  <span class="t" style="left:125.4px;top:167.5px;width:40px;text-align:center;font-size:14px;color:#e8e8e8;font-family:'Liberation Serif',serif;font-weight:bold">T</span>
  <div style="left:139.9px;top:181px;width:11px;height:1px;background:#e8e8e8"></div>
  <span class="t" style="left:145.7px;top:168.0px;width:40px;text-align:center;font-size:14px;color:#e8e8e8;font-family:'Liberation Serif',serif;font-weight:bold">T</span>
  <div style="left:160.2px;top:174.5px;width:11px;height:1px;background:#e8e8e8"></div>
  <span class="t" style="left:2.6px;top:191.0px;width:40px;text-align:center;font-size:15px;color:#e8e8e8;font-family:'Liberation Serif',serif;">fi</span>
  <span class="t" style="left:22.7px;top:191.5px;width:40px;text-align:center;font-size:15px;color:#8e8e8e;font-family:'Liberation Serif',serif;font-style:italic">&#x3c3;</span>
  <span class="t" style="left:42.5px;top:191.0px;width:40px;text-align:center;font-size:15px;color:#e8e8e8;font-family:'Liberation Serif',serif;">st</span>
  <span class="t" style="left:64.0px;top:191.0px;width:40px;text-align:center;font-size:16px;color:#8e8e8e;font-family:'Liberation Serif',serif;font-style:italic">A</span>
  <span class="t" style="left:84.5px;top:193.0px;width:40px;text-align:center;font-size:14px;color:#8e8e8e;font-family:'Liberation Serif',serif;">aa</span>
  <svg style="left:97.5px;top:193px" width="14" height="4" viewBox="0 0 14 4"><path d="M0 2H12" stroke="#8e8e8e" stroke-width="1"/><path d="M10.5 0L14 2L10.5 4Z" fill="#8e8e8e"/></svg>
  <span class="t" style="left:104.9px;top:191.0px;width:40px;text-align:center;font-size:16px;color:#8e8e8e;font-family:'Liberation Serif',serif;font-style:italic">T</span>
  <span class="t" style="left:125.4px;top:191.5px;width:40px;text-align:center;font-size:15px;color:#8e8e8e;font-family:'Liberation Serif',serif;">1<span style="position:static;font-size:9px;vertical-align:5px">st</span></span>
  <span class="t" style="left:145.7px;top:191.5px;width:40px;text-align:center;font-size:15px;color:#8e8e8e;font-family:'Liberation Serif',serif;">&#xbd;</span>
  <div style="left:4px;top:213px;width:102px;height:18.5px;background:#454545;border:1px solid #626262;border-radius:3px"></div>
  <span class="t" id="c_lang" style="left:12px;top:216px;font-size:12px;color:#e6e6e6;">美国英语</span>
  <svg style="left:96px;top:220.0px" width="8" height="5" viewBox="0 0 8 5"><path d="M0.7 0.7 L4 4 L7.3 0.7" fill="none" stroke="#cfcfcf" stroke-width="1.1"/></svg>
  <span class="t" style="left:111px;top:214px;font-size:8px;color:#dcdcdc;">a</span>
  <span class="t" style="left:115.5px;top:215px;font-size:11px;color:#dcdcdc;">a</span>
  <div style="left:127px;top:213px;width:57px;height:18.5px;background:#454545;border:1px solid #626262;border-radius:3px"></div>
  <span class="t" id="c_sharp" style="left:135px;top:216px;font-size:12px;color:#e6e6e6;">锐利</span>
  <svg style="left:174px;top:220.0px" width="8" height="5" viewBox="0 0 8 5"><path d="M0.7 0.7 L4 4 L7.3 0.7" fill="none" stroke="#cfcfcf" stroke-width="1.1"/></svg>
  <div style="left:0px;top:232.5px;width:218px;height:3.5px;background:#3a3a3a"></div>
  <div style="left:0px;top:236px;width:218px;height:23px;background:#424242"></div>
  <div style="left:0px;top:236px;width:36.5px;height:23px;background:#535353"></div>
  <span class="t" id="tab_layers" style="left:7px;top:242.5px;font-size:11px;color:#f4f4f4;">图层</span>
  <div style="left:36.5px;top:236px;width:36px;height:22.5px;border-right:1px solid #393939"></div>
  <div style="left:72.5px;top:236px;width:37px;height:22.5px;border-right:1px solid #393939"></div>
  <span class="t" id="tab_paths" style="left:44px;top:242px;font-size:11px;color:#b4b4b4;">路径</span>
  <span class="t" id="tab_chan" style="left:81px;top:242px;font-size:11px;color:#b4b4b4;">通道</span>
  <svg style="left:203.5px;top:243.5px" width="9" height="8" viewBox="0 0 9 8"><path d="M0 0.5H9 M0 2.8H9 M0 5.1H9 M0 7.4H9" stroke="#bcbcbc" stroke-width="1"/></svg>
  <div style="left:3.5px;top:267px;width:73.0px;height:18.5px;background:#454545;border:1px solid #626262;border-radius:3px"></div>
  <svg style="left:9px;top:270.5px" width="11" height="11" viewBox="0 0 11 11"><circle cx="4.4" cy="4.4" r="3.2" fill="none" stroke="#e4e4e4" stroke-width="1.5"/><path d="M6.8 6.8L10.2 10.2" stroke="#e4e4e4" stroke-width="1.8"/></svg>
  <span class="t" id="l_type" style="left:22.5px;top:270.5px;font-size:12px;color:#e6e6e6;">类型</span>
  <svg style="left:66px;top:274.0px" width="8" height="5" viewBox="0 0 8 5"><path d="M0.7 0.7 L4 4 L7.3 0.7" fill="none" stroke="#cfcfcf" stroke-width="1.1"/></svg>
  <svg style="left:89.5px;top:269.5px" width="12" height="11" viewBox="0 0 12 11"><rect x="0.7" y="0.7" width="10.6" height="8.6" fill="none" stroke="#e0e0e0" stroke-width="1.4"/><path d="M2 8L4.6 4.6L6.4 6.6L7.6 5.4L10 8Z" fill="#e0e0e0"/></svg>
  <svg style="left:111px;top:269.5px" width="11" height="11" viewBox="0 0 11 11"><circle cx="5.5" cy="5.5" r="4.7" fill="none" stroke="#e0e0e0" stroke-width="1.3"/><path d="M2.2 8.8 A4.7 4.7 0 0 1 8.8 2.2 Z" fill="#e0e0e0"/></svg>
  <span class="t" style="left:133px;top:269px;font-size:13px;color:#e4e4e4;font-family:'Liberation Serif',serif;font-weight:bold">T</span>
  <svg style="left:152px;top:269.5px" width="12" height="12" viewBox="0 0 12 12"><rect x="2" y="2" width="8" height="8" fill="none" stroke="#e0e0e0" stroke-width="1.2"/><rect x="0.3" y="0.3" width="3" height="3" fill="#e0e0e0"/><rect x="8.7" y="0.3" width="3" height="3" fill="#e0e0e0"/><rect x="0.3" y="8.7" width="3" height="3" fill="#e0e0e0"/><rect x="8.7" y="8.7" width="3" height="3" fill="#e0e0e0"/></svg>
  <svg style="left:173px;top:269px" width="11" height="13" viewBox="0 0 11 13"><path d="M3.4 0.6H7.6L10.4 3.4V10.6H3.4Z" fill="none" stroke="#e0e0e0" stroke-width="1.2"/><path d="M7.4 0.6V3.6H10.4" fill="none" stroke="#e0e0e0" stroke-width="1"/><rect x="0.4" y="6.6" width="5.6" height="6" fill="#e0e0e0"/></svg>
  <div style="left:196px;top:270px;width:9px;height:15px;background:#464646;border-radius:4.5px"></div>
  <div style="left:196.5px;top:267.5px;width:8px;height:8px;background:#e2e2e2;border-radius:4px"></div>
  <div style="left:0px;top:288.5px;width:218px;height:1px;background:#464646"></div>
  <div style="left:3.5px;top:292px;width:99.0px;height:18px;background:#454545;border:1px solid #626262;border-radius:3px"></div>
  <span class="t" id="l_normal" style="left:11px;top:295px;font-size:12px;color:#e6e6e6;">正常</span>
  <svg style="left:92.5px;top:299.0px" width="8" height="5" viewBox="0 0 8 5"><path d="M0.7 0.7 L4 4 L7.3 0.7" fill="none" stroke="#cfcfcf" stroke-width="1.1"/></svg>
  <span class="t" id="l_opacity" style="left:109.5px;top:295px;font-size:12px;color:#e6e6e6;">不透明度:</span>
  <div style="left:157.5px;top:292px;width:46.0px;height:18px;background:#454545;border:1px solid #626262;border-radius:3px"></div>
  <div style="left:190.5px;top:293px;width:1px;height:16px;background:#626262"></div>
  <span class="t" id="l_100a" style="left:161.5px;top:295.5px;font-size:12px;color:#e6e6e6;">100%</span>
  <svg style="left:193px;top:299.0px" width="8" height="5" viewBox="0 0 8 5"><path d="M0.7 0.7 L4 4 L7.3 0.7" fill="none" stroke="#cfcfcf" stroke-width="1.1"/></svg>
  <div style="left:0px;top:312.5px;width:218px;height:1px;background:#4a4a4a"></div>
  <span class="t" id="l_lock" style="left:6px;top:318.5px;font-size:12px;color:#e6e6e6;">锁定:</span>
  <svg style="left:37px;top:319px" width="11" height="11" viewBox="0 0 11 11"><rect x="0.5" y="0.5" width="10" height="10" fill="#e4e4e4"/><path d="M1.5 1.5h2.7v2.7h-2.7z M6.8 1.5h2.7v2.7h-2.7z M4.2 4.2h2.6v2.6h-2.6z M1.5 6.8h2.7v2.7h-2.7z M6.8 6.8h2.7v2.7h-2.7z" fill="#4a4a4a"/></svg>
  <svg style="left:55.5px;top:318px" width="12" height="13" viewBox="0 0 12 13"><path d="M10.8 0.6C9.6 1.2 6.2 5.2 5.2 7.2L6.8 8.4C8.4 6.8 11 2.6 11.4 1Z" fill="#e4e4e4"/><path d="M4.6 7.8C3 7.8 2.4 9 2.2 10.2C2 11.2 1.4 11.8 0.4 12C2.2 12.8 4.8 12.4 5.8 10.8C6.4 9.8 6 8.6 4.6 7.8Z" fill="#e4e4e4"/></svg>
  <svg style="left:73.5px;top:318.5px" width="12" height="12" viewBox="0 0 20 20"><path d="M10 1 L13 4.4 H11 V9 H15.6 V7 L19 10 L15.6 13 V11 H11 V15.6 H13 L10 19 L7 15.6 H9 V11 H4.4 V13 L1 10 L4.4 7 V9 H9 V4.4 H7 Z" fill="#e4e4e4"/></svg>
  <svg style="left:92.5px;top:318.5px" width="12" height="12" viewBox="0 0 12 12"><path d="M3 0V9H12 M0 3H9V12" fill="none" stroke="#e4e4e4" stroke-width="1.4"/></svg>
  <svg style="left:112.5px;top:317.5px" width="10" height="13" viewBox="0 0 10 13"><path d="M2.6 6V3.8C2.6 0.6 7.4 0.6 7.4 3.8V6" fill="none" stroke="#e4e4e4" stroke-width="1.5"/><rect x="0.4" y="5.6" width="9.2" height="7" fill="#e4e4e4"/><rect x="4.2" y="7.8" width="1.6" height="2.6" fill="#535353"/></svg>
  <span class="t" id="l_fill" style="left:130px;top:318.5px;font-size:12px;color:#e6e6e6;">填充:</span>
  <div style="left:157.5px;top:316px;width:46.0px;height:16px;background:#454545;border:1px solid #626262;border-radius:3px"></div>
  <div style="left:190.5px;top:317px;width:1px;height:14px;background:#626262"></div>
  <span class="t" id="l_100b" style="left:161.5px;top:318.5px;font-size:12px;color:#e6e6e6;">100%</span>
  <svg style="left:193px;top:322.0px" width="8" height="5" viewBox="0 0 8 5"><path d="M0.7 0.7 L4 4 L7.3 0.7" fill="none" stroke="#cfcfcf" stroke-width="1.1"/></svg>
  <div style="left:0px;top:338px;width:204.5px;height:206px;background:#535353;border-top:1px solid #424242"></div>
  <div style="left:0px;top:367px;width:204.5px;height:1px;background:#464646"></div>
  <svg style="left:6.5px;top:347.5px" width="12" height="9" viewBox="0 0 12 9"><path d="M0.4 4.5C2 1.6 4 0.6 6 0.6C8 0.6 10 1.6 11.6 4.5C10 7.4 8 8.4 6 8.4C4 8.4 2 7.4 0.4 4.5Z" fill="#dedede"/><circle cx="6" cy="4.5" r="2.5" fill="#535353"/><circle cx="6" cy="4.5" r="1.2" fill="#dedede"/></svg>
  <div style="left:29px;top:338px;width:22.5px;height:27.5px;background-color:#fff;background-image:linear-gradient(45deg,#d2d2d2 25%,transparent 25%,transparent 75%,#d2d2d2 75%),linear-gradient(45deg,#d2d2d2 25%,transparent 25%,transparent 75%,#d2d2d2 75%);background-size:7px 7px;background-position:0 0,3.5px 3.5px;border:1px solid #333;border-radius:1.5px"></div>
  <span class="t" id="ly0" style="left:59.5px;top:346px;font-size:12px;color:#e6e6e6;">图层 6</span>
  <div style="left:0px;top:402px;width:204.5px;height:1px;background:#464646"></div>
  <svg style="left:6.5px;top:382.5px" width="12" height="9" viewBox="0 0 12 9"><path d="M0.4 4.5C2 1.6 4 0.6 6 0.6C8 0.6 10 1.6 11.6 4.5C10 7.4 8 8.4 6 8.4C4 8.4 2 7.4 0.4 4.5Z" fill="#dedede"/><circle cx="6" cy="4.5" r="2.5" fill="#535353"/><circle cx="6" cy="4.5" r="1.2" fill="#dedede"/></svg>
  <div style="left:29px;top:373px;width:22.5px;height:27.5px;background-color:#fff;background-image:linear-gradient(45deg,#d2d2d2 25%,transparent 25%,transparent 75%,#d2d2d2 75%),linear-gradient(45deg,#d2d2d2 25%,transparent 25%,transparent 75%,#d2d2d2 75%);background-size:7px 7px;background-position:0 0,3.5px 3.5px;border:1px solid #333;border-radius:1.5px"></div>
  <span class="t" id="ly1" style="left:59.5px;top:381px;font-size:12px;color:#e6e6e6;">图层 5</span>
  <div style="left:0px;top:437px;width:204.5px;height:1px;background:#464646"></div>
  <svg style="left:6.5px;top:417.5px" width="12" height="9" viewBox="0 0 12 9"><path d="M0.4 4.5C2 1.6 4 0.6 6 0.6C8 0.6 10 1.6 11.6 4.5C10 7.4 8 8.4 6 8.4C4 8.4 2 7.4 0.4 4.5Z" fill="#dedede"/><circle cx="6" cy="4.5" r="2.5" fill="#535353"/><circle cx="6" cy="4.5" r="1.2" fill="#dedede"/></svg>
  <div style="left:29px;top:408px;width:22.5px;height:27.5px;background-color:#fff;background-image:linear-gradient(45deg,#d2d2d2 25%,transparent 25%,transparent 75%,#d2d2d2 75%),linear-gradient(45deg,#d2d2d2 25%,transparent 25%,transparent 75%,#d2d2d2 75%);background-size:7px 7px;background-position:0 0,3.5px 3.5px;border:1px solid #333;border-radius:1.5px"><div style="left:6px;top:5px;width:9px;height:6px;background:#8f7aa6;border-radius:4px 5px 2px 3px"></div></div>
  <span class="t" id="ly2" style="left:59.5px;top:416px;font-size:12px;color:#e6e6e6;">图层 2</span>
  <div style="left:0px;top:472px;width:204.5px;height:1px;background:#464646"></div>
  <svg style="left:6.5px;top:452.5px" width="12" height="9" viewBox="0 0 12 9"><path d="M0.4 4.5C2 1.6 4 0.6 6 0.6C8 0.6 10 1.6 11.6 4.5C10 7.4 8 8.4 6 8.4C4 8.4 2 7.4 0.4 4.5Z" fill="#dedede"/><circle cx="6" cy="4.5" r="2.5" fill="#535353"/><circle cx="6" cy="4.5" r="1.2" fill="#dedede"/></svg>
  <div style="left:29px;top:443px;width:22.5px;height:27.5px;background-color:#fff;background-image:linear-gradient(45deg,#d2d2d2 25%,transparent 25%,transparent 75%,#d2d2d2 75%),linear-gradient(45deg,#d2d2d2 25%,transparent 25%,transparent 75%,#d2d2d2 75%);background-size:7px 7px;background-position:0 0,3.5px 3.5px;border:1px solid #333;border-radius:1.5px"></div>
  <span class="t" id="ly3" style="left:59.5px;top:451px;font-size:12px;color:#e6e6e6;">图层 4</span>
  <div style="left:0px;top:507px;width:204.5px;height:1px;background:#464646"></div>
  <div style="left:7px;top:487px;width:10px;height:10px;border:1px solid #666"></div>
  <div style="left:29px;top:478px;width:22.5px;height:27.5px;background-color:#fff;background-image:linear-gradient(45deg,#d2d2d2 25%,transparent 25%,transparent 75%,#d2d2d2 75%),linear-gradient(45deg,#d2d2d2 25%,transparent 25%,transparent 75%,#d2d2d2 75%);background-size:7px 7px;background-position:0 0,3.5px 3.5px;border:1px solid #333;border-radius:1.5px"></div>
  <span class="t" id="ly4" style="left:59.5px;top:486px;font-size:12px;color:#e6e6e6;">图层 3</span>
  <div style="left:0px;top:542px;width:204.5px;height:1px;background:#464646"></div>
  <svg style="left:6.5px;top:522.5px" width="12" height="9" viewBox="0 0 12 9"><path d="M0.4 4.5C2 1.6 4 0.6 6 0.6C8 0.6 10 1.6 11.6 4.5C10 7.4 8 8.4 6 8.4C4 8.4 2 7.4 0.4 4.5Z" fill="#dedede"/><circle cx="6" cy="4.5" r="2.5" fill="#535353"/><circle cx="6" cy="4.5" r="1.2" fill="#dedede"/></svg>
  <div style="left:29px;top:513px;width:22.5px;height:27.5px;background:#fff;border:1px solid #333;border-radius:1.5px"></div>
  <span class="t" id="ly5" style="left:59.5px;top:521px;font-size:12px;color:#e6e6e6;">图层 1</span>
  <div style="left:25px;top:338px;width:1px;height:206px;background:#494949"></div>
  <div style="left:204.5px;top:338px;width:13.5px;height:206px;background:#4a4a4a;border-left:1px solid #424242"></div>
  <div style="left:206px;top:408px;width:10px;height:104px;background:#6a6a6a"></div>
  <svg style="left:207px;top:345px" width="8" height="5" viewBox="0 0 8 5"><path d="M0.6 4.4L4 1L7.4 4.4" fill="none" stroke="#9a9a9a" stroke-width="1.1"/></svg>
  <svg style="left:207px;top:532px" width="8" height="5" viewBox="0 0 8 5"><path d="M0.6 0.6L4 4L7.4 0.6" fill="none" stroke="#9a9a9a" stroke-width="1.1"/></svg>
</div>
<!--/DOCK-->






</body>
</html>
